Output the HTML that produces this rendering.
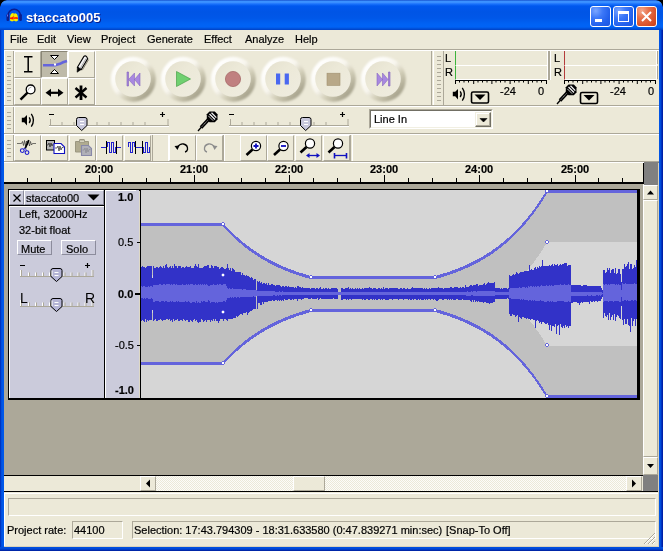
<!DOCTYPE html>
<html><head><meta charset="utf-8">
<style>
*{margin:0;padding:0;box-sizing:border-box}
html,body{width:663px;height:551px;overflow:hidden;background:#000}
body{font-family:"Liberation Sans",sans-serif;font-size:11px;color:#000;position:relative}
.a{position:absolute}
.t{position:absolute;white-space:nowrap;line-height:12px;will-change:transform;-webkit-text-stroke:.2px currentColor}
svg{position:absolute;overflow:visible}
.hl{position:absolute;height:1px}
.vl{position:absolute;width:1px}
.btn{position:absolute;width:27px;height:27px;background:#ece9d8;border-top:1px solid #fff;border-left:1px solid #fff;border-right:1px solid #aca899;border-bottom:1px solid #aca899}
.grip{position:absolute;width:4px;background:repeating-linear-gradient(#ece9d8 0 1px,#aca899 1px 2px,#ece9d8 2px 4px)}
.circ{position:absolute;width:46px;height:45px;border-radius:50%;
 background:radial-gradient(ellipse 50% 50% at 50% 50%,#ece9d8 0,#ece9d8 72%,rgba(236,233,216,0) 92%),linear-gradient(135deg,#ffffff 15%,#f4f2e8 40%,#d8d4c0 62%,#a9a590 88%);
 box-shadow:1px 1px 2px rgba(140,135,110,.55);filter:blur(.4px)}
.tbtn{position:absolute;width:21px;height:21px;border:1px solid #fff;border-radius:3px}
</style></head><body>
<!-- window frame -->
<div class="a" style="left:0;top:0;width:663px;height:551px;background:linear-gradient(90deg,#0020a8 0,#0048d8 1px,#0055e5 2px,#0058ea 3px,#0058ea 659px,#0048d8 661px,#0020a8 662px);border-radius:7px 7px 0 0"></div>
<div class="a" style="left:0;top:547px;width:663px;height:4px;background:linear-gradient(#0050e0,#0048d8 2px,#0030b8 3px,#001c98 4px)"></div>
<div class="a" style="left:0;top:0;width:663px;height:30px;border-radius:7px 7px 0 0;
 background:linear-gradient(#0a3cc0 0,#3d94ff 1px,#3a8eff 2.5px,#1a72fc 4px,#0058ee 6px,#0055e5 12px,#0057e8 18px,#0062f4 24px,#0063f6 27px,#0052dc 28.5px,#0040c4 30px)"></div>
<svg style="left:0;top:0" width="663" height="30">
 <path d="M0 0H7Q1 1 0 7Z" fill="#000"/>
 <path d="M663 0H656Q662 1 663 7Z" fill="#000"/>
</svg>
<!-- app icon -->
<svg style="left:5px;top:7px" width="18" height="16" viewBox="0 0 18 16">
 <path d="M2.8 9A6.4 6.8 0 0 1 15.6 9" fill="none" stroke="#0c1c8c" stroke-width="1.5"/>
 <rect x="1.5" y="7" width="2.7" height="7" rx="1.2" fill="#0c1c8c"/>
 <rect x="14.2" y="7" width="2.7" height="7" rx="1.2" fill="#0c1c8c"/>
 <rect x="2" y="7.5" width=".8" height="2" fill="#8080ff"/>
 <path d="M5 13.5C4.8 10 5.2 7.5 6.5 6.5L8 6 9 6.8 10.5 6.2 12 7.2C12.8 8.8 13.2 11 12.8 13.8L11 14.5 9.2 13.8 7 14.5Z" fill="#f8f000"/>
 <path d="M5 10.5L7 10.2 8.6 9 9.5 10.4 11 10 12.9 10.6 12.9 12 10 11.8 8 12.4 5 12Z" fill="#ff1800"/>
 <path d="M8.7 6.5V14" stroke="#e8a000" stroke-width=".6"/>
</svg>
<div class="t" style="left:26px;top:10px;color:#fff;font-weight:bold;font-size:13px;line-height:15px;text-shadow:1px 1px 0 #0a1e8c;-webkit-text-stroke:0">staccato005</div>
<!-- title buttons -->
<div class="tbtn" style="left:590px;top:6px;background:radial-gradient(ellipse at 25% 20%,#7ba6ff 0,#3c78f8 35%,#2260ec 70%,#1d56e0 100%)"><div class="a" style="left:4px;top:12px;width:7px;height:3px;background:#fff"></div></div>
<div class="tbtn" style="left:613px;top:6px;background:radial-gradient(ellipse at 25% 20%,#7ba6ff 0,#3c78f8 35%,#2260ec 70%,#1d56e0 100%)"><div class="a" style="left:4px;top:3.5px;width:11px;height:11px;border:1px solid #fff;border-top-width:3px"></div></div>
<div class="tbtn" style="left:636px;top:6px;background:radial-gradient(ellipse at 25% 20%,#f4a88c 0,#e6704a 35%,#d9522a 70%,#c83e18 100%)">
 <svg style="left:4px;top:4px" width="11" height="11"><path d="M1 1L10 10M10 1L1 10" stroke="#fff" stroke-width="2"/></svg></div>

<!-- client -->
<div class="a" style="left:4px;top:30px;width:655px;height:517px;background:#ece9d8"></div>
<div class="t" style="left:10px;top:33px">File</div>
<div class="t" style="left:37px;top:33px">Edit</div>
<div class="t" style="left:67px;top:33px">View</div>
<div class="t" style="left:101px;top:33px">Project</div>
<div class="t" style="left:147px;top:33px">Generate</div>
<div class="t" style="left:204px;top:33px">Effect</div>
<div class="t" style="left:245px;top:33px">Analyze</div>
<div class="t" style="left:295px;top:33px">Help</div>
<!-- toolbar separators -->
<div class="hl" style="left:4px;top:49px;width:655px;background:#aca899"></div>
<div class="hl" style="left:4px;top:50px;width:655px;background:#fff"></div>
<div class="hl" style="left:4px;top:105px;width:655px;background:#aca899"></div>
<div class="hl" style="left:4px;top:106px;width:655px;background:#fff"></div>
<div class="hl" style="left:4px;top:133px;width:655px;background:#aca899"></div>
<div class="hl" style="left:4px;top:134px;width:655px;background:#fff"></div>
<div class="hl" style="left:4px;top:161px;width:655px;background:#aca899"></div>
<div class="hl" style="left:4px;top:162px;width:655px;background:#fff"></div>
<!-- grips -->
<div class="grip" style="left:7px;top:55px;height:48px"></div>
<div class="grip" style="left:7px;top:111px;height:20px"></div>
<div class="grip" style="left:7px;top:139px;height:20px"></div>
<div class="grip" style="left:437px;top:55px;height:48px"></div>
<div class="vl" style="left:4px;top:51px;height:54px;background:#fff"></div>
<div class="vl" style="left:13px;top:51px;height:54px;background:#aca899"></div>
<div class="vl" style="left:4px;top:107px;height:26px;background:#fff"></div>
<div class="vl" style="left:14px;top:107px;height:26px;background:#fff"></div>
<div class="vl" style="left:14px;top:51px;height:54px;background:#fff"></div>
<div class="vl" style="left:13px;top:107px;height:26px;background:#aca899"></div>
<div class="vl" style="left:4px;top:135px;height:26px;background:#fff"></div>
<div class="vl" style="left:13px;top:135px;height:26px;background:#aca899"></div>
<div class="vl" style="left:431px;top:51px;height:54px;background:#aca899"></div>
<div class="vl" style="left:433px;top:51px;height:54px;background:#fff"></div>
<div class="vl" style="left:443px;top:51px;height:54px;background:#aca899"></div>
<div class="vl" style="left:95px;top:51px;height:54px;background:#fff"></div>

<!-- tool buttons -->
<div class="btn" style="left:14px;top:51px"></div>
<div class="btn" style="left:41px;top:51px;background:#bebaa9;border-color:#8a8676 #fff #fff #8a8676"></div>
<div class="btn" style="left:68px;top:51px"></div>
<div class="btn" style="left:14px;top:78px"></div>
<div class="btn" style="left:41px;top:78px"></div>
<div class="btn" style="left:68px;top:78px"></div>
<svg style="left:0;top:0" width="100" height="106">
 <!-- I-beam -->
 <path d="M24 56.8H32.5M24 71.8H32.5M28.2 56.8V71.8" stroke="#000" stroke-width="1.5" fill="none"/>
 <!-- envelope tool -->
 <path d="M50.5 55.5H58.5L54.5 59.5Z" fill="#fff" stroke="#000" stroke-width="1"/>
 <path d="M50.5 73.5H58.5L54.5 69.5Z" fill="#fff" stroke="#000" stroke-width="1"/>
 <path d="M43 65.3H55L60 63.8L63 62.3L67 61" stroke="#6464dc" stroke-width="2.6" fill="none"/>
 <rect x="54" y="63.5" width="2" height="2" fill="#fff"/>
 <!-- pencil -->
 <path d="M82.3 70.2L88.6 59.6" stroke="#8c8878" stroke-width="1"/>
 <path d="M77.45 67.23L83.9 56.37Q85.8 54.6 87.7 58.63L81.25 69.49Z" fill="#f4f4f4" stroke="#000" stroke-width="1.1"/>
 <path d="M77.1 72.2L77.45 67.23L81.25 69.49Z" fill="#000" stroke="#000" stroke-width=".6"/>
 <path d="M80.2 68.4L86.2 58.3" stroke="#a8a8a8" stroke-width="1"/>
 <!-- magnifier -->
 <path d="M27.8 92.3L20.5 99.6" stroke="#000" stroke-width="2.4"/>
 <circle cx="30.6" cy="89.4" r="4.4" fill="#fff" stroke="#000" stroke-width="1.3"/>
 <path d="M28 90.5Q28.5 87.5 31.5 87" stroke="#b0b0b0" stroke-width="1" fill="none"/>
 <!-- double arrow -->
 <path d="M48 92.8H61" stroke="#000" stroke-width="2.2"/>
 <path d="M45.5 92.8L51 88.8V96.8Z M63.5 92.8L58 88.8V96.8Z" fill="#000"/>
 <!-- asterisk -->
 <path d="M81 85.5V100" stroke="#000" stroke-width="2.8"/>
 <path d="M75.5 88L86.5 97.5M86.5 88L75.5 97.5" stroke="#000" stroke-width="2.4"/>
</svg>

<!-- transport -->
<svg style="left:0;top:0" width="430" height="106">
 <defs>
  <linearGradient id="rg" x1="0" y1="0" x2="1" y2="1"><stop offset=".15" stop-color="#ffffff"/><stop offset=".45" stop-color="#f8f6ee"/><stop offset=".62" stop-color="#d2ceb8"/><stop offset=".9" stop-color="#9a9680"/></linearGradient>
  <linearGradient id="fg" x1="0" y1="0" x2="1" y2="1"><stop offset="0" stop-color="#e4e0ce"/><stop offset=".4" stop-color="#ece9d8"/><stop offset="1" stop-color="#efece0"/></linearGradient>
  <filter id="bl" x="-20%" y="-20%" width="140%" height="140%"><feGaussianBlur stdDeviation="1.2"/></filter>
  <filter id="bl2" x="-20%" y="-20%" width="140%" height="140%"><feGaussianBlur stdDeviation=".7"/></filter>
  <g id="cb"><circle cx=".3" cy=".3" r="22.5" fill="url(#rg)" filter="url(#bl)"/><circle r="17.8" fill="url(#fg)" filter="url(#bl2)"/></g>
 </defs>
 <use href="#cb" x="133" y="79"/><use href="#cb" x="183" y="79"/><use href="#cb" x="233" y="79"/>
 <use href="#cb" x="283" y="79"/><use href="#cb" x="333" y="79"/><use href="#cb" x="383" y="79"/>
</svg>
<svg style="left:0;top:0" width="430" height="106">
 <path d="M127 72H128.5V86H127Z" fill="#a888e0" stroke="#8060b8" stroke-width=".6"/>
 <path d="M128.5 79.5L134.5 73V86Z M134.5 79.5L140 73V86Z" fill="#a888e0" stroke="#8868c0" stroke-width=".6"/>
 <path d="M176.5 71.5L190.5 79L176.5 86.5Z" fill="#70d070" stroke="#48a048" stroke-width=".7"/>
 <circle cx="233" cy="79" r="7.6" fill="#c08080" stroke="#a06060" stroke-width=".7"/>
 <rect x="276" y="73.5" width="4.2" height="11" fill="#4a68f0"/>
 <rect x="284.7" y="73.5" width="4.2" height="11" fill="#4a68f0"/>
 <rect x="327" y="73.2" width="13" height="12.2" fill="#b8a888" stroke="#a09070" stroke-width=".6"/>
 <path d="M377 73V86L382.5 79.5Z M382.5 73V86L388 79.5Z" fill="#a888e0" stroke="#8868c0" stroke-width=".6"/>
 <path d="M388.5 72H390V86H388.5Z" fill="#a888e0" stroke="#8060b8" stroke-width=".6"/>
</svg>

<!-- meters -->
<div class="t" style="left:445px;top:52px">L</div>
<div class="t" style="left:445px;top:66px">R</div>
<div class="t" style="left:554px;top:52px">L</div>
<div class="t" style="left:554px;top:66px">R</div>
<div class="a" style="left:455px;top:51px;width:93px;height:15px;border-right:1px solid #fff;border-bottom:1px solid #fff;border-left:1px solid #3cb43c"></div>
<div class="a" style="left:455px;top:66px;width:93px;height:14px;border-right:1px solid #fff;border-bottom:1px solid #fff;border-left:1px solid #3cb43c"></div>
<div class="a" style="left:548px;top:51px;width:2px;height:29px;background:#aca899"></div>
<div class="vl" style="left:550px;top:51px;height:29px;background:#fff"></div>
<div class="vl" style="left:657px;top:51px;height:13px;background:#aca899"></div>
<div class="vl" style="left:657px;top:66px;height:13px;background:#aca899"></div>
<div class="a" style="left:564px;top:51px;width:93px;height:15px;border-right:1px solid #fff;border-bottom:1px solid #fff;border-left:1px solid #b43c3c"></div>
<div class="a" style="left:564px;top:66px;width:93px;height:14px;border-right:1px solid #fff;border-bottom:1px solid #fff;border-left:1px solid #b43c3c"></div>
<svg style="left:0;top:0" width="663" height="106">
 <path id="tk" d="M455 80.5H547M455.5 80V84M473.7 80V84M491.9 80V84M510.1 80V84M528.3 80V84M546.5 80V84" stroke="#000" stroke-width="1" fill="none"/>
 <path d="M459.5 80V82.5M464 80V82.5M468.5 80V82.5M478 80V82.5M482.5 80V82.5M487 80V82.5M496 80V82.5M500.5 80V82.5M505 80V82.5M514.5 80V82.5M519 80V82.5M523.5 80V82.5M532.5 80V82.5M537 80V82.5M541.5 80V82.5" stroke="#000" stroke-width="1" fill="none"/>
 <g transform="translate(109,0)">
 <path d="M455 80.5H547M455.5 80V84M473.7 80V84M491.9 80V84M510.1 80V84M528.3 80V84M546.5 80V84" stroke="#000" stroke-width="1" fill="none"/>
 <path d="M459.5 80V82.5M464 80V82.5M468.5 80V82.5M478 80V82.5M482.5 80V82.5M487 80V82.5M496 80V82.5M500.5 80V82.5M505 80V82.5M514.5 80V82.5M519 80V82.5M523.5 80V82.5M532.5 80V82.5M537 80V82.5M541.5 80V82.5" stroke="#000" stroke-width="1" fill="none"/>
 </g>
 <!-- speaker -->
 <use href="#spk" x="431" y="-26"/>
 <!-- dropdowns -->
 <rect x="471.5" y="92" width="17" height="11" rx="1.5" fill="#ece9d8" stroke="#000" stroke-width="1.6"/>
 <path d="M474.5 94.5H485.5L480 100Z" fill="#000"/>
 <rect x="580.5" y="92.5" width="17" height="11" rx="1.5" fill="#ece9d8" stroke="#000" stroke-width="1.6"/>
 <path d="M583.5 95H594.5L589 100.5Z" fill="#000"/>
 <!-- mic -->
 <use href="#mic" x="359" y="-27"/>
</svg>
<div class="t" style="left:500px;top:85px">-24</div>
<div class="t" style="left:538px;top:85px">0</div>
<div class="t" style="left:610px;top:85px">-24</div>
<div class="t" style="left:648px;top:85px">0</div>

<!-- mixer toolbar -->
<svg style="left:0;top:0" width="663" height="134">
 <!-- speaker -->
 <g id="spk">
 <path d="M21.8 117.8H24.2L27 115V125.5L24.2 122.2H21.8Z" fill="#000"/>
 <path d="M29.2 117.3Q31.3 120.2 29.2 123M31.3 113.8Q35.6 120.2 31.3 126.6" stroke="#000" stroke-width="1.3" fill="none"/>
 </g>
 <!-- slider 1 -->
 <path d="M49 125.5H169" stroke="#aca899" stroke-width="1"/>
 <path d="M49 126.5H169" stroke="#fff" stroke-width="1"/>
 <path d="M49 114.5H54M160 114.5H165M162.5 112V117" stroke="#000" stroke-width="1.2"/>
 <path d="M50.5 119V125M62 122V125M74 122V125M97 122V125M109 122V125M121 122V125M133 122V125M145 122V125M168 119V125" stroke="#aca899" stroke-width="1"/>
 <path d="M76.5 125.5V119.5Q76.5 117.5 78.5 117.5H85Q87 117.5 87 119.5V125.5L81.7 130.5Z" fill="#c8c8dc" stroke="#000" stroke-width="1"/>
 <path d="M80 121.5H84M80 124.5H84" stroke="#fff" stroke-width="1"/>
 <!-- mic -->
 <g id="mic">
 <path d="M208.5 119.5L201 127.5" stroke="#000" stroke-width="3.4"/>
 <path d="M207.5 120.5L202 126.5" stroke="#fff" stroke-width=".8" stroke-dasharray="1 .8"/>
 <path d="M201.5 127L198 131" stroke="#000" stroke-width="1.4"/>
 <path d="M209.5 111.5H214.8L217.5 114.2V119.5L214.8 122.2H209.5L206.8 119.5V114.2Z" fill="#000"/>
 <path d="M209.5 114L215 119.5M211.5 112.8L216.3 117.6" stroke="#f4f4f4" stroke-width="1.3"/>
 <path d="M208.3 115.8L213.2 120.7" stroke="#c8c8c8" stroke-width="1"/>
 </g>
 <!-- slider 2 -->
 <path d="M229 125.5H349" stroke="#aca899" stroke-width="1"/>
 <path d="M229 126.5H349" stroke="#fff" stroke-width="1"/>
 <path d="M229 114.5H234M340 114.5H345M342.5 112V117" stroke="#000" stroke-width="1.2"/>
 <path d="M230.5 119V125M242 122V125M254 122V125M266 122V125M278 122V125M290 122V125M314 122V125M326 122V125M348 119V125" stroke="#aca899" stroke-width="1"/>
 <path d="M300.5 125.5V119.5Q300.5 117.5 302.5 117.5H309Q311 117.5 311 119.5V125.5L305.7 130.5Z" fill="#c8c8dc" stroke="#000" stroke-width="1"/>
 <path d="M304 121.5H308M304 124.5H308" stroke="#fff" stroke-width="1"/>
</svg>
<!-- combo -->
<div class="a" style="left:369px;top:109px;width:124px;height:20px;background:#fff;border-top:1px solid #aca899;border-left:1px solid #aca899;border-right:1px solid #fff;border-bottom:1px solid #fff"></div>
<div class="a" style="left:370px;top:110px;width:122px;height:18px;border-top:1px solid #716f64;border-left:1px solid #716f64;border-right:1px solid #f1efe2;border-bottom:1px solid #f1efe2"></div>
<div class="t" style="left:374px;top:113px">Line In</div>
<div class="a" style="left:475px;top:112px;width:16px;height:15px;background:#ece9d8;border-top:1px solid #f1efe2;border-left:1px solid #f1efe2;border-right:1px solid #716f64;border-bottom:1px solid #716f64;box-shadow:inset -1px -1px 0 #aca899,inset 1px 1px 0 #fff"></div>
<svg style="left:0;top:0" width="663" height="134"><path d="M480 118.5H487L483.5 122Z" fill="#000" stroke="#000" stroke-width=".6"/></svg>
<!-- edit toolbar buttons -->
<div class="btn" style="left:14px;top:135px;height:26px"></div>
<div class="btn" style="left:41px;top:135px;height:26px"></div>
<div class="btn" style="left:69px;top:135px;height:26px"></div>
<div class="btn" style="left:96px;top:135px;height:26px"></div>
<div class="btn" style="left:124px;top:135px;height:26px"></div>
<div class="btn" style="left:169px;top:135px;height:26px"></div>
<div class="btn" style="left:196px;top:135px;height:26px"></div>
<div class="btn" style="left:240px;top:135px;height:26px"></div>
<div class="btn" style="left:267px;top:135px;height:26px"></div>
<div class="btn" style="left:295px;top:135px;height:26px"></div>
<div class="btn" style="left:323px;top:135px;height:26px"></div>
<div class="vl" style="left:152px;top:135px;height:26px;background:#aca899"></div>
<div class="vl" style="left:168px;top:135px;height:26px;background:#fff"></div>
<div class="vl" style="left:223px;top:135px;height:26px;background:#aca899"></div>
<div class="vl" style="left:224px;top:135px;height:26px;background:#fff"></div>
<div class="vl" style="left:350px;top:135px;height:26px;background:#aca899"></div>
<div class="vl" style="left:352px;top:135px;height:26px;background:#fff"></div>
<svg style="left:0;top:0" width="663" height="163">
 <!-- cut -->
 <path d="M17 143.5H21.5L22.5 141.5L23.5 145.5L24.5 140.5L25.5 146L26.5 141L27.5 145L28.5 140.5L29.5 146L30.5 141.5L31.5 145L32.5 143.5H36" stroke="#202020" stroke-width=".6" fill="none"/>
 <path d="M28.8 140.2L25.2 148.4" stroke="#000" stroke-width="1.8"/>
 <circle cx="22.3" cy="150.6" r="1.9" fill="none" stroke="#1818d0" stroke-width="1.1"/>
 <circle cx="27" cy="152.6" r="1.9" fill="none" stroke="#1818d0" stroke-width="1.1"/>
 <path d="M23.6 149.2L25.2 148M26.4 150.8L25.6 148.6" stroke="#1818d0" stroke-width=".9"/>
 <!-- copy -->
 <rect x="46.5" y="140.5" width="8" height="9.5" fill="#b4b4b4" stroke="#000" stroke-width="1"/>
 <path d="M46 145H48L49 143L50 147L51 143L52 146L53 144" stroke="#202020" stroke-width=".7" fill="none"/>
 <path d="M54 143.5H61L64.5 147V153.5H54Z" fill="#fff" stroke="#1010c0" stroke-width="1.1"/>
 <path d="M55 148H57L58 146L59 151L60 146L61 150L62 147.5H63.5" stroke="#202020" stroke-width=".7" fill="none"/>
 <!-- paste (disabled) -->
 <path d="M75.5 141.5H79L80 139.5H84L85 141.5H88.5V152H75.5Z" fill="#b0ab90" stroke="#9a9680" stroke-width="1"/>
 <rect x="79.5" y="140" width="5" height="2.5" fill="#d8d4c0" stroke="#9a9680" stroke-width=".8"/>
 <path d="M81.5 145.5H88.5L91.5 148.5V155.5H81.5Z" fill="#b0b0b8" stroke="#8888a8" stroke-width="1.1"/>
 <path d="M82.5 150H84L85 148L86 153L87 148L88 152L89 149.5H90.5" stroke="#8a8a90" stroke-width=".7" fill="none"/>
 <!-- trim -->
 <path d="M101 147.5H106M117 147.5H121" stroke="#2020d0" stroke-width="1" shape-rendering="crispEdges"/>
 <path d="M107.5 147V142.5H109.5V152.5H111.5V142.5H113.5V152.5H115.5V147" stroke="#2020d0" stroke-width="1" fill="none" shape-rendering="crispEdges"/>
 <path d="M106.5 141V154M116.5 141V154" stroke="#000" stroke-width="1" shape-rendering="crispEdges"/>
 <!-- silence -->
 <path d="M128.5 147V142.5H130.5V152.5H132.5V142.5H134.5V147" stroke="#2020d0" stroke-width="1" fill="none" shape-rendering="crispEdges"/>
 <path d="M136 147.5H142" stroke="#2020d0" stroke-width="1" shape-rendering="crispEdges"/>
 <path d="M143.5 147V152.5H145.5V142.5H147.5V152.5H149.5V147" stroke="#2020d0" stroke-width="1" fill="none" shape-rendering="crispEdges"/>
 <path d="M135.5 141V154M142.5 141V154" stroke="#000" stroke-width="1" shape-rendering="crispEdges"/>
 <!-- undo -->
 <path d="M177 147.5Q180 143.5 183.5 144Q188 145 187.5 149.5Q187 151.5 185 152" stroke="#000" stroke-width="1.3" fill="none"/>
 <path d="M174.5 146L179.5 145.5L177.5 150Z" fill="#000"/>
 <!-- redo -->
 <path d="M215 147.5Q212 143.5 208.5 144Q204 145 204.5 149.5Q205 151.5 207 152" stroke="#8c8c8c" stroke-width="1.3" fill="none"/>
 <path d="M217.5 146L212.5 145.5L214.5 150Z" fill="#8c8c8c"/>
 <!-- zoom in -->
 <path d="M252.5 149.5L246.5 155" stroke="#000" stroke-width="2.6"/>
 <circle cx="256" cy="146" r="4.6" fill="#fff" stroke="#000" stroke-width="1.2"/>
 <path d="M253.5 146H258.5M256 143.5V148.5" stroke="#1010c0" stroke-width="1.8"/>
 <!-- zoom out -->
 <path d="M280 149.5L274 155" stroke="#000" stroke-width="2.6"/>
 <circle cx="283.5" cy="146" r="4.6" fill="#fff" stroke="#000" stroke-width="1.2"/>
 <path d="M281 146H286" stroke="#1010c0" stroke-width="1.8"/>
 <!-- fit sel -->
 <path d="M306.5 147L300.5 152.5" stroke="#000" stroke-width="2.6"/>
 <circle cx="310" cy="143.5" r="4.6" fill="#fff" stroke="#000" stroke-width="1.2"/>
 <path d="M308 155.5H318" stroke="#1010c0" stroke-width="1.3"/>
 <path d="M306 155.5L309.5 153V158Z M320 155.5L316.5 153V158Z" fill="#1010c0"/>
 <!-- fit -->
 <path d="M334.5 147L328.5 152.5" stroke="#000" stroke-width="2.6"/>
 <circle cx="338" cy="143.5" r="4.6" fill="#fff" stroke="#000" stroke-width="1.2"/>
 <path d="M334.5 155.5H346.5" stroke="#1010c0" stroke-width="1.3"/>
 <path d="M334.5 153V158.5M346.5 153V158.5" stroke="#1010c0" stroke-width="1.6"/>
</svg>


<!-- ruler -->
<div class="a" style="left:4px;top:163px;width:640px;height:19px;background:#ece9d8"></div>
<div class="a" style="left:4px;top:182px;width:640px;height:2px;background:#000"></div>
<div class="vl" style="left:643px;top:163px;height:20px;background:#000"></div>
<div class="a" style="left:644px;top:162px;width:15px;height:23px;background:#808080"></div>
<svg style="left:0;top:0" width="663" height="190"><path d="M27.5 178V182M51.5 178V182M75.5 178V182M99.5 175V182M122.5 178V182M146.5 178V182M170.5 178V182M194.5 175V182M218.5 178V182M241.5 178V182M265.5 178V182M289.5 175V182M313.5 178V182M337.5 178V182M360.5 178V182M384.5 175V182M408.5 178V182M432.5 178V182M456.5 178V182M479.5 175V182M503.5 178V182M527.5 178V182M551.5 178V182M575.5 175V182M598.5 178V182M622.5 178V182" stroke="#000" stroke-width="1"/></svg>
<div class="t" style="left:85px;top:163px;width:28px;text-align:center;font-weight:bold">20:00</div><div class="t" style="left:180px;top:163px;width:28px;text-align:center;font-weight:bold">21:00</div><div class="t" style="left:275px;top:163px;width:28px;text-align:center;font-weight:bold">22:00</div><div class="t" style="left:370px;top:163px;width:28px;text-align:center;font-weight:bold">23:00</div><div class="t" style="left:465px;top:163px;width:28px;text-align:center;font-weight:bold">24:00</div><div class="t" style="left:561px;top:163px;width:28px;text-align:center;font-weight:bold">25:00</div>
<!-- track area -->
<div class="a" style="left:4px;top:184px;width:639px;height:292px;background:#aca899"></div>
<!-- track -->
<div class="a" style="left:8px;top:189px;width:632px;height:211px;background:#000"></div>
<div class="a" style="left:9px;top:190px;width:95px;height:208px;background:#cbcbdb"></div>
<div class="a" style="left:105px;top:190px;width:34px;height:208px;background:#cbcbdb"></div>
<div class="a" style="left:141px;top:190px;width:496px;height:208px;background:#d6d6d6"></div>
<!-- close box & name -->
<div class="a" style="left:9px;top:190px;width:15px;height:15px;border-top:1px solid #fff;border-left:1px solid #fff;border-right:1px solid #8c8c9c;border-bottom:1px solid #8c8c9c"></div>
<svg style="left:0;top:0" width="140" height="400">
 <path d="M13.5 194.5L20.5 201.5M20.5 194.5L13.5 201.5" stroke="#000" stroke-width="1.3"/>
 <path d="M87.5 194.5H99.5L93.5 200.5Z" fill="#000"/>
</svg>
<div class="a" style="left:24px;top:190px;width:80px;height:15px;border-top:1px solid #fff;border-left:1px solid #fff;border-right:1px solid #8c8c9c;border-bottom:1px solid #8c8c9c"></div>
<div class="t" style="left:26px;top:192px">staccato00</div>
<div class="hl" style="left:9px;top:205px;width:95px;background:#000"></div>
<div class="a" style="left:9px;top:206px;width:95px;height:192px;border-top:1px solid #fff;border-left:1px solid #fff"></div>
<div class="t" style="left:19px;top:208px">Left, 32000Hz</div>
<div class="t" style="left:19px;top:224px">32-bit float</div>
<div class="a" style="left:17px;top:240px;width:35px;height:15px;border-top:1px solid #fff;border-left:1px solid #fff;border-right:1px solid #8c8c9c;border-bottom:1px solid #8c8c9c"></div>
<div class="t" style="left:21px;top:243px">Mute</div>
<div class="a" style="left:61px;top:240px;width:35px;height:15px;border-top:1px solid #fff;border-left:1px solid #fff;border-right:1px solid #8c8c9c;border-bottom:1px solid #8c8c9c"></div>
<div class="t" style="left:66px;top:243px">Solo</div>
<div class="vl" style="left:104px;top:190px;height:208px;background:#000"></div>
<div class="vl" style="left:139px;top:191px;height:207px;background:#ded9c6"></div>
<div class="vl" style="left:105px;top:190px;height:208px;background:#fff"></div>
<div class="hl" style="left:105px;top:190px;width:31px;background:#fff"></div>
<div class="vl" style="left:140px;top:190px;height:208px;background:#000"></div>
<svg style="left:0;top:0" width="140" height="400">
 <path d="M20 265.5H25M85 265.5H90M87.5 263V268" stroke="#000" stroke-width="1.2"/>
 <path d="M20 276.5H94" stroke="#aca899" stroke-width="1"/>
 <path d="M20 306.5H94" stroke="#aca899" stroke-width="1"/>
 <path d="M20.5 270V276M28.5 272.5V276M35.5 272.5V276M42.5 272.5V276M49.5 272.5V276M64 272.5V276M71 272.5V276M78 272.5V276M85 272.5V276M92 270V276" stroke="#fff" stroke-width="1"/>
 <path d="M21.5 270V276M29.5 272.5V276M36.5 272.5V276M43.5 272.5V276M50.5 272.5V276M65 272.5V276M72 272.5V276M79 272.5V276M86 272.5V276M93 270V276" stroke="#aca899" stroke-width="1"/>
 <g transform="translate(0,30)">
 <path d="M20.5 270V276M28.5 272.5V276M35.5 272.5V276M42.5 272.5V276M49.5 272.5V276M64 272.5V276M71 272.5V276M78 272.5V276M85 272.5V276M92 270V276" stroke="#fff" stroke-width="1"/>
 <path d="M21.5 270V276M29.5 272.5V276M36.5 272.5V276M43.5 272.5V276M50.5 272.5V276M65 272.5V276M72 272.5V276M79 272.5V276M86 272.5V276M93 270V276" stroke="#aca899" stroke-width="1"/>
 </g>
 <path d="M51 276.5V270.5Q51 268.5 53 268.5H60Q62 268.5 62 270.5V276.5L56.5 281.5Z" fill="#b4b4d6" stroke="#000" stroke-width="1"/>
 <path d="M52 270.5V276" stroke="#fff" stroke-width="1"/>
 <path d="M54.5 272.5H58.5M54.5 275.5H58.5" stroke="#fff" stroke-width="1"/>
 <path d="M51 306.5V300.5Q51 298.5 53 298.5H60Q62 298.5 62 300.5V306.5L56.5 311.5Z" fill="#b4b4d6" stroke="#000" stroke-width="1"/>
 <path d="M52 300.5V306" stroke="#fff" stroke-width="1"/>
 <path d="M54.5 302.5H58.5M54.5 305.5H58.5" stroke="#fff" stroke-width="1"/>
</svg>
<div class="t" style="left:20px;top:291px;font-size:14px;line-height:14px;-webkit-text-stroke:0">L</div>
<div class="t" style="left:85px;top:291px;font-size:14px;line-height:14px;-webkit-text-stroke:0">R</div>

<svg style="left:0;top:0" width="663" height="551" viewBox="0 0 663 551" shape-rendering="crispEdges"><defs><clipPath id="wc"><rect x="141" y="190" width="496" height="208"/></clipPath></defs><g clip-path="url(#wc)"><path fill="#c0c0c0" d="M141 224h1V275h-1ZM141 313h1V363h-1ZM142 224h1V275h-1ZM142 313h1V363h-1ZM143 224h1V275h-1ZM143 313h1V363h-1ZM144 224h1V275h-1ZM144 313h1V363h-1ZM145 224h1V275h-1ZM145 313h1V363h-1ZM146 224h1V275h-1ZM146 313h1V363h-1ZM147 224h1V275h-1ZM147 313h1V363h-1ZM148 224h1V275h-1ZM148 313h1V363h-1ZM149 224h1V275h-1ZM149 313h1V363h-1ZM150 224h1V275h-1ZM150 313h1V363h-1ZM151 224h1V275h-1ZM151 313h1V363h-1ZM152 224h1V275h-1ZM152 313h1V363h-1ZM153 224h1V275h-1ZM153 313h1V363h-1ZM154 224h1V275h-1ZM154 313h1V363h-1ZM155 224h1V275h-1ZM155 313h1V363h-1ZM156 224h1V275h-1ZM156 313h1V363h-1ZM157 224h1V275h-1ZM157 313h1V363h-1ZM158 224h1V275h-1ZM158 313h1V363h-1ZM159 224h1V275h-1ZM159 313h1V363h-1ZM160 224h1V275h-1ZM160 313h1V363h-1ZM161 224h1V275h-1ZM161 313h1V363h-1ZM162 224h1V275h-1ZM162 313h1V363h-1ZM163 224h1V275h-1ZM163 313h1V363h-1ZM164 224h1V275h-1ZM164 313h1V363h-1ZM165 224h1V275h-1ZM165 313h1V363h-1ZM166 224h1V275h-1ZM166 313h1V363h-1ZM167 224h1V275h-1ZM167 313h1V363h-1ZM168 224h1V275h-1ZM168 313h1V363h-1ZM169 224h1V275h-1ZM169 313h1V363h-1ZM170 224h1V275h-1ZM170 313h1V363h-1ZM171 224h1V275h-1ZM171 313h1V363h-1ZM172 224h1V275h-1ZM172 313h1V363h-1ZM173 224h1V275h-1ZM173 313h1V363h-1ZM174 224h1V275h-1ZM174 313h1V363h-1ZM175 224h1V275h-1ZM175 313h1V363h-1ZM176 224h1V275h-1ZM176 313h1V363h-1ZM177 224h1V275h-1ZM177 313h1V363h-1ZM178 224h1V275h-1ZM178 313h1V363h-1ZM179 224h1V275h-1ZM179 313h1V363h-1ZM180 224h1V275h-1ZM180 313h1V363h-1ZM181 224h1V275h-1ZM181 313h1V363h-1ZM182 224h1V275h-1ZM182 313h1V363h-1ZM183 224h1V275h-1ZM183 313h1V363h-1ZM184 224h1V275h-1ZM184 313h1V363h-1ZM185 224h1V275h-1ZM185 313h1V363h-1ZM186 224h1V275h-1ZM186 313h1V363h-1ZM187 224h1V275h-1ZM187 313h1V363h-1ZM188 224h1V275h-1ZM188 313h1V363h-1ZM189 224h1V275h-1ZM189 313h1V363h-1ZM190 224h1V275h-1ZM190 313h1V363h-1ZM191 224h1V275h-1ZM191 313h1V363h-1ZM192 224h1V275h-1ZM192 313h1V363h-1ZM193 224h1V275h-1ZM193 313h1V363h-1ZM194 224h1V275h-1ZM194 313h1V363h-1ZM195 224h1V275h-1ZM195 313h1V363h-1ZM196 224h1V275h-1ZM196 313h1V363h-1ZM197 224h1V275h-1ZM197 313h1V363h-1ZM198 224h1V275h-1ZM198 313h1V363h-1ZM199 224h1V275h-1ZM199 313h1V363h-1ZM200 224h1V275h-1ZM200 313h1V363h-1ZM201 224h1V275h-1ZM201 313h1V363h-1ZM202 224h1V275h-1ZM202 313h1V363h-1ZM203 224h1V275h-1ZM203 313h1V363h-1ZM204 224h1V275h-1ZM204 313h1V363h-1ZM205 224h1V275h-1ZM205 313h1V363h-1ZM206 224h1V275h-1ZM206 313h1V363h-1ZM207 224h1V275h-1ZM207 313h1V363h-1ZM208 224h1V275h-1ZM208 313h1V363h-1ZM209 224h1V275h-1ZM209 313h1V363h-1ZM210 224h1V275h-1ZM210 313h1V363h-1ZM211 224h1V275h-1ZM211 313h1V363h-1ZM212 224h1V275h-1ZM212 313h1V363h-1ZM213 224h1V275h-1ZM213 313h1V363h-1ZM214 224h1V275h-1ZM214 313h1V363h-1ZM215 224h1V275h-1ZM215 313h1V363h-1ZM216 224h1V275h-1ZM216 313h1V363h-1ZM217 224h1V275h-1ZM217 313h1V363h-1ZM218 224h1V275h-1ZM218 313h1V363h-1ZM219 224h1V275h-1ZM219 313h1V363h-1ZM220 224h1V275h-1ZM220 313h1V363h-1ZM221 224h1V275h-1ZM221 313h1V363h-1ZM222 224h1V275h-1ZM222 313h1V363h-1ZM223 225h1V276h-1ZM223 312h1V362h-1ZM224 226h1V277h-1ZM224 311h1V361h-1ZM225 227h1V278h-1ZM225 310h1V360h-1ZM226 228h1V279h-1ZM226 309h1V359h-1ZM227 229h1V280h-1ZM227 308h1V358h-1ZM228 230h1V281h-1ZM228 307h1V357h-1ZM229 231h1V282h-1ZM229 306h1V356h-1ZM230 232h1V283h-1ZM230 305h1V355h-1ZM231 233h1V284h-1ZM231 304h1V354h-1ZM232 234h1V285h-1ZM232 303h1V353h-1ZM233 235h1V286h-1ZM233 302h1V352h-1ZM234 236h1V287h-1ZM234 301h1V351h-1ZM235 237h1V288h-1ZM235 300h1V350h-1ZM236 238h1V289h-1ZM236 299h1V349h-1ZM237 239h1V290h-1ZM237 298h1V348h-1ZM238 240h1V291h-1ZM238 297h1V347h-1ZM239 240h1V292h-1ZM239 296h1V347h-1ZM240 241h1V293h-1ZM240 295h1V346h-1ZM241 242h1V293h-1ZM241 295h1V345h-1ZM242 243h1V344h-1ZM243 244h1V343h-1ZM244 245h1V342h-1ZM245 245h1V342h-1ZM246 246h1V341h-1ZM247 247h1V340h-1ZM248 248h1V339h-1ZM249 248h1V339h-1ZM250 249h1V338h-1ZM251 250h1V337h-1ZM252 251h1V336h-1ZM253 251h1V336h-1ZM254 252h1V335h-1ZM255 253h1V334h-1ZM256 253h1V334h-1ZM257 254h1V333h-1ZM258 255h1V332h-1ZM259 255h1V332h-1ZM260 256h1V331h-1ZM261 256h1V331h-1ZM262 257h1V330h-1ZM263 258h1V329h-1ZM264 258h1V329h-1ZM265 259h1V328h-1ZM266 259h1V328h-1ZM267 260h1V327h-1ZM268 260h1V327h-1ZM269 261h1V326h-1ZM270 262h1V325h-1ZM271 262h1V325h-1ZM272 263h1V324h-1ZM273 263h1V324h-1ZM274 264h1V323h-1ZM275 264h1V323h-1ZM276 265h1V322h-1ZM277 265h1V322h-1ZM278 265h1V322h-1ZM279 266h1V321h-1ZM280 266h1V321h-1ZM281 267h1V320h-1ZM282 267h1V320h-1ZM283 268h1V319h-1ZM284 268h1V319h-1ZM285 268h1V319h-1ZM286 269h1V318h-1ZM287 269h1V318h-1ZM288 270h1V317h-1ZM289 270h1V317h-1ZM290 270h1V317h-1ZM291 271h1V316h-1ZM292 271h1V316h-1ZM293 272h1V315h-1ZM294 272h1V315h-1ZM295 272h1V315h-1ZM296 273h1V314h-1ZM297 273h1V314h-1ZM298 273h1V314h-1ZM299 274h1V313h-1ZM300 274h1V313h-1ZM301 274h1V313h-1ZM302 275h1V312h-1ZM303 275h1V312h-1ZM304 275h1V312h-1ZM305 275h1V312h-1ZM306 276h1V311h-1ZM307 276h1V311h-1ZM308 276h1V311h-1ZM309 277h1V310h-1ZM310 277h1V310h-1ZM311 277h1V310h-1ZM312 277h1V310h-1ZM313 277h1V310h-1ZM314 277h1V310h-1ZM315 277h1V310h-1ZM316 277h1V310h-1ZM317 277h1V310h-1ZM318 277h1V310h-1ZM319 277h1V310h-1ZM320 277h1V310h-1ZM321 277h1V310h-1ZM322 277h1V310h-1ZM323 277h1V310h-1ZM324 277h1V310h-1ZM325 277h1V310h-1ZM326 277h1V310h-1ZM327 277h1V310h-1ZM328 277h1V310h-1ZM329 277h1V310h-1ZM330 277h1V310h-1ZM331 277h1V310h-1ZM332 277h1V310h-1ZM333 277h1V310h-1ZM334 277h1V310h-1ZM335 277h1V310h-1ZM336 277h1V310h-1ZM337 277h1V310h-1ZM338 277h1V310h-1ZM339 277h1V310h-1ZM340 277h1V310h-1ZM341 277h1V310h-1ZM342 277h1V310h-1ZM343 277h1V310h-1ZM344 277h1V310h-1ZM345 277h1V310h-1ZM346 277h1V310h-1ZM347 277h1V310h-1ZM348 277h1V310h-1ZM349 277h1V310h-1ZM350 277h1V310h-1ZM351 277h1V310h-1ZM352 277h1V310h-1ZM353 277h1V310h-1ZM354 277h1V310h-1ZM355 277h1V310h-1ZM356 277h1V310h-1ZM357 277h1V310h-1ZM358 277h1V310h-1ZM359 277h1V310h-1ZM360 277h1V310h-1ZM361 277h1V310h-1ZM362 277h1V310h-1ZM363 277h1V310h-1ZM364 277h1V310h-1ZM365 277h1V310h-1ZM366 277h1V310h-1ZM367 277h1V310h-1ZM368 277h1V310h-1ZM369 277h1V310h-1ZM370 277h1V310h-1ZM371 277h1V310h-1ZM372 277h1V310h-1ZM373 277h1V310h-1ZM374 277h1V310h-1ZM375 277h1V310h-1ZM376 277h1V310h-1ZM377 277h1V310h-1ZM378 277h1V310h-1ZM379 277h1V310h-1ZM380 277h1V310h-1ZM381 277h1V310h-1ZM382 277h1V310h-1ZM383 277h1V310h-1ZM384 277h1V310h-1ZM385 277h1V310h-1ZM386 277h1V310h-1ZM387 277h1V310h-1ZM388 277h1V310h-1ZM389 277h1V310h-1ZM390 277h1V310h-1ZM391 277h1V310h-1ZM392 277h1V310h-1ZM393 277h1V310h-1ZM394 277h1V310h-1ZM395 277h1V310h-1ZM396 277h1V310h-1ZM397 277h1V310h-1ZM398 277h1V310h-1ZM399 277h1V310h-1ZM400 277h1V310h-1ZM401 277h1V310h-1ZM402 277h1V310h-1ZM403 277h1V310h-1ZM404 277h1V310h-1ZM405 277h1V310h-1ZM406 277h1V310h-1ZM407 277h1V310h-1ZM408 277h1V310h-1ZM409 277h1V310h-1ZM410 277h1V310h-1ZM411 277h1V310h-1ZM412 277h1V310h-1ZM413 277h1V310h-1ZM414 277h1V310h-1ZM415 277h1V310h-1ZM416 277h1V310h-1ZM417 277h1V310h-1ZM418 277h1V310h-1ZM419 277h1V310h-1ZM420 277h1V310h-1ZM421 277h1V310h-1ZM422 277h1V310h-1ZM423 277h1V310h-1ZM424 277h1V310h-1ZM425 277h1V310h-1ZM426 277h1V310h-1ZM427 277h1V310h-1ZM428 277h1V310h-1ZM429 277h1V310h-1ZM430 277h1V310h-1ZM431 277h1V310h-1ZM432 277h1V310h-1ZM433 277h1V310h-1ZM434 277h1V310h-1ZM435 277h1V310h-1ZM436 277h1V310h-1ZM437 276h1V311h-1ZM438 276h1V311h-1ZM439 276h1V311h-1ZM440 275h1V312h-1ZM441 275h1V312h-1ZM442 275h1V312h-1ZM443 275h1V312h-1ZM444 274h1V313h-1ZM445 274h1V313h-1ZM446 274h1V313h-1ZM447 273h1V314h-1ZM448 273h1V314h-1ZM449 273h1V314h-1ZM450 272h1V315h-1ZM451 272h1V315h-1ZM452 272h1V315h-1ZM453 271h1V316h-1ZM454 271h1V316h-1ZM455 270h1V317h-1ZM456 270h1V317h-1ZM457 270h1V317h-1ZM458 269h1V318h-1ZM459 269h1V318h-1ZM460 268h1V319h-1ZM461 268h1V319h-1ZM462 268h1V319h-1ZM463 267h1V320h-1ZM464 267h1V320h-1ZM465 266h1V321h-1ZM466 266h1V321h-1ZM467 265h1V322h-1ZM468 265h1V322h-1ZM469 265h1V322h-1ZM470 264h1V323h-1ZM471 264h1V323h-1ZM472 263h1V324h-1ZM473 263h1V324h-1ZM474 262h1V325h-1ZM475 262h1V325h-1ZM476 261h1V326h-1ZM477 260h1V327h-1ZM478 260h1V327h-1ZM479 259h1V328h-1ZM480 259h1V328h-1ZM481 258h1V329h-1ZM482 258h1V329h-1ZM483 257h1V330h-1ZM484 257h1V330h-1ZM485 256h1V331h-1ZM486 255h1V332h-1ZM487 255h1V332h-1ZM488 254h1V333h-1ZM489 253h1V334h-1ZM490 253h1V334h-1ZM491 252h1V335h-1ZM492 251h1V336h-1ZM493 251h1V336h-1ZM494 250h1V337h-1ZM495 249h1V338h-1ZM496 249h1V338h-1ZM497 248h1V339h-1ZM498 247h1V340h-1ZM499 246h1V341h-1ZM500 245h1V342h-1ZM501 245h1V342h-1ZM502 244h1V343h-1ZM503 243h1V344h-1ZM504 242h1V293h-1ZM504 295h1V345h-1ZM505 241h1V293h-1ZM505 295h1V346h-1ZM506 241h1V292h-1ZM506 296h1V346h-1ZM507 240h1V291h-1ZM507 297h1V347h-1ZM508 239h1V290h-1ZM508 298h1V348h-1ZM509 238h1V289h-1ZM509 299h1V349h-1ZM510 237h1V288h-1ZM510 300h1V350h-1ZM511 236h1V287h-1ZM511 301h1V351h-1ZM512 235h1V286h-1ZM512 302h1V352h-1ZM513 234h1V285h-1ZM513 303h1V353h-1ZM514 233h1V284h-1ZM514 304h1V354h-1ZM515 232h1V283h-1ZM515 305h1V355h-1ZM516 231h1V282h-1ZM516 306h1V356h-1ZM517 230h1V281h-1ZM517 307h1V357h-1ZM518 229h1V280h-1ZM518 308h1V358h-1ZM519 228h1V279h-1ZM519 309h1V359h-1ZM520 227h1V278h-1ZM520 310h1V360h-1ZM521 226h1V277h-1ZM521 311h1V361h-1ZM522 225h1V276h-1ZM522 312h1V362h-1ZM523 224h1V275h-1ZM523 313h1V363h-1ZM524 222h1V274h-1ZM524 314h1V365h-1ZM525 221h1V273h-1ZM525 315h1V366h-1ZM526 220h1V271h-1ZM526 317h1V367h-1ZM527 219h1V270h-1ZM527 318h1V368h-1ZM528 218h1V269h-1ZM528 319h1V369h-1ZM529 216h1V268h-1ZM529 320h1V371h-1ZM530 215h1V266h-1ZM530 322h1V372h-1ZM531 214h1V265h-1ZM531 323h1V373h-1ZM532 213h1V264h-1ZM532 324h1V374h-1ZM533 211h1V263h-1ZM533 325h1V376h-1ZM534 210h1V261h-1ZM534 327h1V377h-1ZM535 209h1V260h-1ZM535 328h1V378h-1ZM536 207h1V258h-1ZM536 330h1V380h-1ZM537 206h1V257h-1ZM537 331h1V381h-1ZM538 204h1V256h-1ZM538 332h1V383h-1ZM539 203h1V254h-1ZM539 334h1V384h-1ZM540 201h1V253h-1ZM540 335h1V386h-1ZM541 200h1V251h-1ZM541 337h1V387h-1ZM542 198h1V250h-1ZM542 338h1V389h-1ZM543 197h1V248h-1ZM543 340h1V390h-1ZM544 195h1V246h-1ZM544 342h1V392h-1ZM545 193h1V245h-1ZM545 343h1V394h-1ZM546 192h1V243h-1ZM546 345h1V395h-1ZM547 191h1V242h-1ZM547 346h1V396h-1ZM548 191h1V242h-1ZM548 346h1V396h-1ZM549 191h1V242h-1ZM549 346h1V396h-1ZM550 191h1V242h-1ZM550 346h1V396h-1ZM551 191h1V242h-1ZM551 346h1V396h-1ZM552 191h1V242h-1ZM552 346h1V396h-1ZM553 191h1V242h-1ZM553 346h1V396h-1ZM554 191h1V242h-1ZM554 346h1V396h-1ZM555 191h1V242h-1ZM555 346h1V396h-1ZM556 191h1V242h-1ZM556 346h1V396h-1ZM557 191h1V242h-1ZM557 346h1V396h-1ZM558 191h1V242h-1ZM558 346h1V396h-1ZM559 191h1V242h-1ZM559 346h1V396h-1ZM560 191h1V242h-1ZM560 346h1V396h-1ZM561 191h1V242h-1ZM561 346h1V396h-1ZM562 191h1V242h-1ZM562 346h1V396h-1ZM563 191h1V242h-1ZM563 346h1V396h-1ZM564 191h1V242h-1ZM564 346h1V396h-1ZM565 191h1V242h-1ZM565 346h1V396h-1ZM566 191h1V242h-1ZM566 346h1V396h-1ZM567 191h1V242h-1ZM567 346h1V396h-1ZM568 191h1V242h-1ZM568 346h1V396h-1ZM569 191h1V242h-1ZM569 346h1V396h-1ZM570 191h1V242h-1ZM570 346h1V396h-1ZM571 191h1V242h-1ZM571 346h1V396h-1ZM572 191h1V242h-1ZM572 346h1V396h-1ZM573 191h1V242h-1ZM573 346h1V396h-1ZM574 191h1V242h-1ZM574 346h1V396h-1ZM575 191h1V242h-1ZM575 346h1V396h-1ZM576 191h1V242h-1ZM576 346h1V396h-1ZM577 191h1V242h-1ZM577 346h1V396h-1ZM578 191h1V242h-1ZM578 346h1V396h-1ZM579 191h1V242h-1ZM579 346h1V396h-1ZM580 191h1V242h-1ZM580 346h1V396h-1ZM581 191h1V242h-1ZM581 346h1V396h-1ZM582 191h1V242h-1ZM582 346h1V396h-1ZM583 191h1V242h-1ZM583 346h1V396h-1ZM584 191h1V242h-1ZM584 346h1V396h-1ZM585 191h1V242h-1ZM585 346h1V396h-1ZM586 191h1V242h-1ZM586 346h1V396h-1ZM587 191h1V242h-1ZM587 346h1V396h-1ZM588 191h1V242h-1ZM588 346h1V396h-1ZM589 191h1V242h-1ZM589 346h1V396h-1ZM590 191h1V242h-1ZM590 346h1V396h-1ZM591 191h1V242h-1ZM591 346h1V396h-1ZM592 191h1V242h-1ZM592 346h1V396h-1ZM593 191h1V242h-1ZM593 346h1V396h-1ZM594 191h1V242h-1ZM594 346h1V396h-1ZM595 191h1V242h-1ZM595 346h1V396h-1ZM596 191h1V242h-1ZM596 346h1V396h-1ZM597 191h1V242h-1ZM597 346h1V396h-1ZM598 191h1V242h-1ZM598 346h1V396h-1ZM599 191h1V242h-1ZM599 346h1V396h-1ZM600 191h1V242h-1ZM600 346h1V396h-1ZM601 191h1V242h-1ZM601 346h1V396h-1ZM602 191h1V242h-1ZM602 346h1V396h-1ZM603 191h1V242h-1ZM603 346h1V396h-1ZM604 191h1V242h-1ZM604 346h1V396h-1ZM605 191h1V242h-1ZM605 346h1V396h-1ZM606 191h1V242h-1ZM606 346h1V396h-1ZM607 191h1V242h-1ZM607 346h1V396h-1ZM608 191h1V242h-1ZM608 346h1V396h-1ZM609 191h1V242h-1ZM609 346h1V396h-1ZM610 191h1V242h-1ZM610 346h1V396h-1ZM611 191h1V242h-1ZM611 346h1V396h-1ZM612 191h1V242h-1ZM612 346h1V396h-1ZM613 191h1V242h-1ZM613 346h1V396h-1ZM614 191h1V242h-1ZM614 346h1V396h-1ZM615 191h1V242h-1ZM615 346h1V396h-1ZM616 191h1V242h-1ZM616 346h1V396h-1ZM617 191h1V242h-1ZM617 346h1V396h-1ZM618 191h1V242h-1ZM618 346h1V396h-1ZM619 191h1V242h-1ZM619 346h1V396h-1ZM620 191h1V242h-1ZM620 346h1V396h-1ZM621 191h1V242h-1ZM621 346h1V396h-1ZM622 191h1V242h-1ZM622 346h1V396h-1ZM623 191h1V242h-1ZM623 346h1V396h-1ZM624 191h1V242h-1ZM624 346h1V396h-1ZM625 191h1V242h-1ZM625 346h1V396h-1ZM626 191h1V242h-1ZM626 346h1V396h-1ZM627 191h1V242h-1ZM627 346h1V396h-1ZM628 191h1V242h-1ZM628 346h1V396h-1ZM629 191h1V242h-1ZM629 346h1V396h-1ZM630 191h1V242h-1ZM630 346h1V396h-1ZM631 191h1V242h-1ZM631 346h1V396h-1ZM632 191h1V242h-1ZM632 346h1V396h-1ZM633 191h1V242h-1ZM633 346h1V396h-1ZM634 191h1V242h-1ZM634 346h1V396h-1ZM635 191h1V242h-1ZM635 346h1V396h-1ZM636 191h1V242h-1ZM636 346h1V396h-1Z"/><path fill="#3232c8" d="M141 267h1V321h-1ZM142 266h1V320h-1ZM143 267h1V321h-1ZM144 267h1V322h-1ZM145 268h1V319h-1ZM146 267h1V322h-1ZM147 266h1V320h-1ZM148 266h1V321h-1ZM149 266h1V320h-1ZM150 266h1V320h-1ZM151 266h1V320h-1ZM152 278h1V310h-1ZM153 266h1V321h-1ZM154 268h1V320h-1ZM155 268h1V319h-1ZM156 267h1V321h-1ZM157 267h1V321h-1ZM158 268h1V320h-1ZM159 267h1V320h-1ZM160 266h1V319h-1ZM161 267h1V320h-1ZM162 268h1V321h-1ZM163 266h1V320h-1ZM164 268h1V320h-1ZM165 265h1V320h-1ZM166 264h1V319h-1ZM167 267h1V319h-1ZM168 268h1V320h-1ZM169 267h1V319h-1ZM170 266h1V321h-1ZM171 268h1V320h-1ZM172 266h1V322h-1ZM173 268h1V319h-1ZM174 264h1V321h-1ZM175 266h1V320h-1ZM176 266h1V320h-1ZM177 268h1V319h-1ZM178 266h1V321h-1ZM179 266h1V321h-1ZM180 266h1V320h-1ZM181 268h1V320h-1ZM182 267h1V321h-1ZM183 267h1V319h-1ZM184 268h1V320h-1ZM185 267h1V321h-1ZM186 266h1V320h-1ZM187 267h1V320h-1ZM188 267h1V322h-1ZM189 267h1V322h-1ZM190 266h1V320h-1ZM191 268h1V321h-1ZM192 268h1V322h-1ZM193 268h1V320h-1ZM194 266h1V319h-1ZM195 264h1V321h-1ZM196 266h1V320h-1ZM197 267h1V322h-1ZM198 264h1V323h-1ZM199 268h1V322h-1ZM200 268h1V322h-1ZM201 268h1V319h-1ZM202 268h1V320h-1ZM203 267h1V322h-1ZM204 266h1V321h-1ZM205 266h1V320h-1ZM206 266h1V322h-1ZM207 265h1V320h-1ZM208 265h1V320h-1ZM209 268h1V320h-1ZM210 268h1V322h-1ZM211 265h1V320h-1ZM212 266h1V321h-1ZM213 268h1V319h-1ZM214 266h1V321h-1ZM215 266h1V319h-1ZM216 266h1V321h-1ZM217 267h1V321h-1ZM218 267h1V323h-1ZM219 269h1V321h-1ZM220 268h1V319h-1ZM221 267h1V319h-1ZM222 267h1V319h-1ZM223 268h1V321h-1ZM224 269h1V319h-1ZM225 269h1V319h-1ZM226 268h1V320h-1ZM227 264h1V321h-1ZM228 268h1V319h-1ZM229 270h1V319h-1ZM230 268h1V319h-1ZM231 271h1V319h-1ZM232 268h1V319h-1ZM233 269h1V318h-1ZM234 270h1V318h-1ZM235 272h1V318h-1ZM236 272h1V316h-1ZM237 272h1V317h-1ZM238 272h1V316h-1ZM239 272h1V315h-1ZM240 272h1V314h-1ZM241 275h1V314h-1ZM242 273h1V315h-1ZM243 275h1V313h-1ZM244 275h1V313h-1ZM245 276h1V313h-1ZM246 275h1V312h-1ZM247 276h1V315h-1ZM248 276h1V313h-1ZM249 277h1V312h-1ZM250 278h1V311h-1ZM251 277h1V311h-1ZM252 278h1V310h-1ZM253 280h1V309h-1ZM254 279h1V309h-1ZM255 279h1V309h-1ZM257 281h1V309h-1ZM258 282h1V303h-1ZM259 281h1V303h-1ZM260 283h1V305h-1ZM261 282h1V305h-1ZM262 284h1V302h-1ZM263 283h1V304h-1ZM264 283h1V302h-1ZM265 284h1V302h-1ZM266 283h1V302h-1ZM267 285h1V302h-1ZM268 283h1V301h-1ZM269 285h1V301h-1ZM270 285h1V301h-1ZM271 284h1V301h-1ZM272 284h1V300h-1ZM273 285h1V301h-1ZM274 285h1V301h-1ZM275 286h1V300h-1ZM276 285h1V300h-1ZM277 285h1V301h-1ZM278 285h1V300h-1ZM279 285h1V301h-1ZM280 286h1V300h-1ZM281 287h1V301h-1ZM282 286h1V300h-1ZM283 286h1V301h-1ZM284 287h1V299h-1ZM285 286h1V300h-1ZM286 286h1V300h-1ZM287 287h1V300h-1ZM288 286h1V299h-1ZM289 287h1V299h-1ZM290 287h1V300h-1ZM291 287h1V300h-1ZM292 287h1V299h-1ZM293 287h1V300h-1ZM294 288h1V299h-1ZM295 287h1V299h-1ZM296 288h1V299h-1ZM297 286h1V301h-1ZM298 286h1V299h-1ZM299 287h1V299h-1ZM300 287h1V299h-1ZM301 288h1V300h-1ZM302 287h1V299h-1ZM303 288h1V299h-1ZM304 288h1V298h-1ZM305 288h1V298h-1ZM306 288h1V298h-1ZM307 288h1V298h-1ZM308 288h1V299h-1ZM309 288h1V299h-1ZM310 289h1V299h-1ZM311 288h1V298h-1ZM312 288h1V299h-1ZM313 288h1V299h-1ZM314 288h1V299h-1ZM315 289h1V299h-1ZM316 288h1V299h-1ZM317 288h1V298h-1ZM318 289h1V300h-1ZM319 288h1V299h-1ZM320 287h1V298h-1ZM321 289h1V299h-1ZM322 289h1V299h-1ZM323 288h1V299h-1ZM324 289h1V299h-1ZM325 288h1V299h-1ZM326 288h1V299h-1ZM327 289h1V299h-1ZM328 288h1V299h-1ZM329 289h1V299h-1ZM330 289h1V299h-1ZM331 288h1V299h-1ZM332 288h1V299h-1ZM333 288h1V298h-1ZM334 288h1V299h-1ZM335 288h1V299h-1ZM336 288h1V299h-1ZM337 289h1V299h-1ZM338 292h1V294h-1ZM339 292h1V294h-1ZM340 292h1V294h-1ZM341 288h1V300h-1ZM342 288h1V300h-1ZM343 289h1V299h-1ZM344 289h1V299h-1ZM345 288h1V299h-1ZM346 288h1V300h-1ZM347 288h1V299h-1ZM348 287h1V300h-1ZM349 289h1V299h-1ZM350 288h1V299h-1ZM351 289h1V300h-1ZM352 288h1V299h-1ZM353 289h1V299h-1ZM354 289h1V299h-1ZM355 288h1V299h-1ZM356 289h1V299h-1ZM357 288h1V299h-1ZM358 289h1V299h-1ZM359 288h1V299h-1ZM360 289h1V299h-1ZM361 289h1V299h-1ZM362 288h1V300h-1ZM363 289h1V299h-1ZM364 288h1V300h-1ZM365 288h1V300h-1ZM366 288h1V299h-1ZM367 288h1V299h-1ZM368 288h1V300h-1ZM369 287h1V300h-1ZM370 288h1V299h-1ZM371 288h1V299h-1ZM372 289h1V300h-1ZM373 288h1V299h-1ZM374 288h1V300h-1ZM375 288h1V299h-1ZM376 289h1V300h-1ZM377 289h1V300h-1ZM378 288h1V299h-1ZM379 288h1V299h-1ZM380 289h1V300h-1ZM381 288h1V299h-1ZM382 289h1V300h-1ZM383 287h1V299h-1ZM384 289h1V299h-1ZM385 288h1V300h-1ZM386 288h1V300h-1ZM387 288h1V300h-1ZM388 289h1V300h-1ZM389 288h1V299h-1ZM390 288h1V299h-1ZM391 288h1V299h-1ZM392 288h1V300h-1ZM393 288h1V299h-1ZM394 288h1V299h-1ZM395 288h1V299h-1ZM396 288h1V299h-1ZM397 288h1V299h-1ZM398 289h1V300h-1ZM399 289h1V299h-1ZM400 288h1V299h-1ZM401 288h1V299h-1ZM402 289h1V299h-1ZM403 288h1V300h-1ZM404 288h1V299h-1ZM405 289h1V299h-1ZM406 289h1V299h-1ZM407 288h1V299h-1ZM408 289h1V300h-1ZM409 289h1V299h-1ZM410 289h1V300h-1ZM411 288h1V300h-1ZM412 287h1V299h-1ZM413 288h1V300h-1ZM414 288h1V299h-1ZM415 288h1V299h-1ZM416 288h1V300h-1ZM417 288h1V300h-1ZM418 288h1V299h-1ZM419 288h1V300h-1ZM420 288h1V299h-1ZM421 288h1V300h-1ZM422 288h1V300h-1ZM423 289h1V300h-1ZM424 288h1V299h-1ZM425 289h1V300h-1ZM426 288h1V299h-1ZM427 289h1V300h-1ZM428 289h1V299h-1ZM429 288h1V299h-1ZM430 289h1V300h-1ZM431 288h1V299h-1ZM432 288h1V299h-1ZM433 288h1V300h-1ZM434 288h1V299h-1ZM435 288h1V300h-1ZM436 288h1V301h-1ZM437 288h1V301h-1ZM438 287h1V300h-1ZM439 288h1V299h-1ZM440 288h1V299h-1ZM441 288h1V299h-1ZM442 288h1V300h-1ZM443 289h1V300h-1ZM444 288h1V299h-1ZM445 288h1V299h-1ZM446 288h1V299h-1ZM447 288h1V300h-1ZM448 288h1V299h-1ZM449 288h1V300h-1ZM450 287h1V299h-1ZM451 287h1V300h-1ZM452 288h1V299h-1ZM453 288h1V300h-1ZM454 287h1V300h-1ZM455 287h1V300h-1ZM456 287h1V299h-1ZM457 287h1V299h-1ZM458 288h1V300h-1ZM459 288h1V300h-1ZM460 287h1V300h-1ZM461 288h1V300h-1ZM462 287h1V299h-1ZM463 287h1V300h-1ZM464 288h1V300h-1ZM465 285h1V300h-1ZM466 287h1V300h-1ZM467 287h1V300h-1ZM468 287h1V300h-1ZM469 286h1V300h-1ZM470 285h1V301h-1ZM471 285h1V302h-1ZM472 286h1V300h-1ZM473 285h1V302h-1ZM474 285h1V300h-1ZM475 285h1V302h-1ZM476 284h1V301h-1ZM477 284h1V302h-1ZM478 286h1V301h-1ZM479 285h1V302h-1ZM480 285h1V302h-1ZM481 285h1V302h-1ZM482 285h1V302h-1ZM483 284h1V303h-1ZM484 283h1V302h-1ZM485 285h1V302h-1ZM486 284h1V303h-1ZM487 283h1V303h-1ZM488 282h1V303h-1ZM489 283h1V304h-1ZM490 283h1V303h-1ZM491 283h1V303h-1ZM492 283h1V303h-1ZM493 283h1V302h-1ZM494 282h1V302h-1ZM495 288h1V299h-1ZM496 288h1V299h-1ZM497 288h1V299h-1ZM498 288h1V299h-1ZM499 288h1V299h-1ZM500 289h1V299h-1ZM501 288h1V299h-1ZM502 289h1V299h-1ZM503 288h1V299h-1ZM504 288h1V299h-1ZM505 288h1V299h-1ZM506 288h1V299h-1ZM507 289h1V298h-1ZM508 288h1V299h-1ZM509 275h1V314h-1ZM510 276h1V316h-1ZM511 276h1V316h-1ZM512 275h1V314h-1ZM513 274h1V315h-1ZM514 275h1V315h-1ZM515 274h1V317h-1ZM516 272h1V316h-1ZM517 273h1V315h-1ZM518 274h1V322h-1ZM519 273h1V317h-1ZM520 272h1V318h-1ZM521 272h1V319h-1ZM522 272h1V317h-1ZM523 272h1V317h-1ZM524 271h1V318h-1ZM525 271h1V318h-1ZM526 271h1V319h-1ZM527 271h1V318h-1ZM528 271h1V319h-1ZM529 265h1V319h-1ZM530 270h1V320h-1ZM531 269h1V319h-1ZM532 270h1V319h-1ZM533 270h1V320h-1ZM534 268h1V320h-1ZM535 267h1V328h-1ZM536 269h1V321h-1ZM537 267h1V320h-1ZM538 268h1V321h-1ZM539 266h1V323h-1ZM540 267h1V322h-1ZM541 266h1V324h-1ZM542 260h1V322h-1ZM543 266h1V322h-1ZM544 266h1V323h-1ZM545 266h1V324h-1ZM546 266h1V324h-1ZM547 266h1V323h-1ZM548 266h1V325h-1ZM549 265h1V330h-1ZM550 266h1V325h-1ZM551 265h1V331h-1ZM552 264h1V326h-1ZM553 266h1V326h-1ZM554 264h1V327h-1ZM555 265h1V324h-1ZM556 265h1V334h-1ZM557 264h1V326h-1ZM558 266h1V325h-1ZM559 265h1V335h-1ZM560 264h1V324h-1ZM561 265h1V327h-1ZM562 264h1V328h-1ZM563 264h1V326h-1ZM564 263h1V328h-1ZM565 263h1V325h-1ZM566 263h1V327h-1ZM567 266h1V326h-1ZM568 265h1V328h-1ZM569 265h1V326h-1ZM570 265h1V326h-1ZM571 285h1V303h-1ZM572 285h1V303h-1ZM573 285h1V302h-1ZM574 285h1V302h-1ZM575 285h1V302h-1ZM576 285h1V302h-1ZM577 285h1V303h-1ZM578 285h1V303h-1ZM579 285h1V305h-1ZM580 285h1V303h-1ZM581 286h1V302h-1ZM582 286h1V303h-1ZM583 285h1V302h-1ZM584 285h1V302h-1ZM585 285h1V302h-1ZM586 285h1V302h-1ZM587 286h1V302h-1ZM588 286h1V302h-1ZM589 286h1V304h-1ZM590 286h1V301h-1ZM591 286h1V302h-1ZM592 286h1V302h-1ZM593 286h1V301h-1ZM594 286h1V302h-1ZM595 286h1V301h-1ZM596 286h1V301h-1ZM597 286h1V302h-1ZM598 286h1V301h-1ZM599 286h1V301h-1ZM600 286h1V301h-1ZM601 288h1V299h-1ZM602 290h1V297h-1ZM603 270h1V318h-1ZM604 270h1V313h-1ZM605 273h1V316h-1ZM606 272h1V317h-1ZM607 268h1V315h-1ZM608 270h1V320h-1ZM609 268h1V313h-1ZM610 273h1V320h-1ZM611 270h1V317h-1ZM612 269h1V315h-1ZM613 269h1V320h-1ZM614 273h1V314h-1ZM615 268h1V321h-1ZM616 274h1V317h-1ZM617 273h1V315h-1ZM618 269h1V316h-1ZM619 269h1V318h-1ZM620 274h1V319h-1ZM621 282h1V306h-1ZM622 269h1V320h-1ZM623 269h1V325h-1ZM624 264h1V319h-1ZM625 267h1V324h-1ZM626 266h1V324h-1ZM627 264h1V319h-1ZM628 262h1V325h-1ZM629 269h1V326h-1ZM630 264h1V332h-1ZM631 264h1V318h-1ZM632 269h1V326h-1ZM633 268h1V321h-1ZM634 265h1V319h-1ZM635 267h1V326h-1ZM636 260h1V319h-1Z"/><path fill="#6464dc" d="M141 286h1V298h-1ZM142 287h1V298h-1ZM143 286h1V299h-1ZM144 286h1V298h-1ZM145 287h1V299h-1ZM146 287h1V298h-1ZM147 287h1V298h-1ZM148 286h1V299h-1ZM149 287h1V299h-1ZM150 286h1V299h-1ZM151 286h1V298h-1ZM152 287h1V299h-1ZM153 285h1V302h-1ZM154 285h1V302h-1ZM155 285h1V301h-1ZM156 285h1V301h-1ZM157 285h1V301h-1ZM158 285h1V301h-1ZM159 284h1V302h-1ZM160 284h1V302h-1ZM161 285h1V301h-1ZM162 285h1V301h-1ZM163 284h1V301h-1ZM164 284h1V302h-1ZM165 285h1V301h-1ZM166 284h1V301h-1ZM167 284h1V302h-1ZM168 284h1V302h-1ZM169 284h1V302h-1ZM170 285h1V301h-1ZM171 284h1V302h-1ZM172 285h1V301h-1ZM173 284h1V302h-1ZM174 284h1V302h-1ZM175 285h1V302h-1ZM176 284h1V301h-1ZM177 285h1V302h-1ZM178 285h1V301h-1ZM179 285h1V302h-1ZM180 285h1V302h-1ZM181 285h1V302h-1ZM182 284h1V302h-1ZM183 285h1V302h-1ZM184 285h1V302h-1ZM185 285h1V301h-1ZM186 284h1V302h-1ZM187 285h1V302h-1ZM188 284h1V301h-1ZM189 285h1V302h-1ZM190 284h1V303h-1ZM191 284h1V303h-1ZM192 284h1V302h-1ZM193 285h1V302h-1ZM194 285h1V302h-1ZM195 284h1V303h-1ZM196 285h1V301h-1ZM197 285h1V303h-1ZM198 284h1V302h-1ZM199 285h1V303h-1ZM200 284h1V303h-1ZM201 285h1V301h-1ZM202 284h1V302h-1ZM203 285h1V301h-1ZM204 284h1V301h-1ZM205 285h1V302h-1ZM206 284h1V302h-1ZM207 285h1V302h-1ZM208 286h1V300h-1ZM209 286h1V301h-1ZM210 285h1V303h-1ZM211 285h1V302h-1ZM212 285h1V302h-1ZM213 284h1V302h-1ZM214 285h1V302h-1ZM215 285h1V303h-1ZM216 285h1V302h-1ZM217 284h1V303h-1ZM218 285h1V302h-1ZM219 284h1V302h-1ZM220 284h1V302h-1ZM221 285h1V302h-1ZM222 285h1V302h-1ZM223 284h1V301h-1ZM224 284h1V301h-1ZM225 284h1V302h-1ZM226 286h1V300h-1ZM227 288h1V298h-1ZM228 289h1V298h-1ZM229 288h1V298h-1ZM230 289h1V297h-1ZM231 289h1V298h-1ZM232 288h1V297h-1ZM233 289h1V298h-1ZM234 289h1V297h-1ZM235 289h1V297h-1ZM236 289h1V298h-1ZM237 289h1V297h-1ZM238 289h1V297h-1ZM239 289h1V298h-1ZM240 289h1V297h-1ZM241 289h1V297h-1ZM242 290h1V297h-1ZM243 289h1V297h-1ZM244 289h1V297h-1ZM245 289h1V297h-1ZM246 290h1V297h-1ZM247 290h1V297h-1ZM248 290h1V297h-1ZM249 290h1V297h-1ZM250 290h1V297h-1ZM251 290h1V297h-1ZM252 290h1V297h-1ZM253 290h1V296h-1ZM254 290h1V297h-1ZM255 290h1V297h-1ZM256 290h1V296h-1ZM257 291h1V296h-1ZM258 291h1V296h-1ZM259 291h1V296h-1ZM260 291h1V296h-1ZM261 291h1V296h-1ZM262 291h1V296h-1ZM263 291h1V296h-1ZM264 291h1V296h-1ZM265 291h1V296h-1ZM266 291h1V296h-1ZM267 291h1V296h-1ZM268 291h1V296h-1ZM269 291h1V296h-1ZM270 291h1V296h-1ZM271 291h1V296h-1ZM272 291h1V296h-1ZM273 291h1V295h-1ZM274 291h1V295h-1ZM275 292h1V296h-1ZM276 292h1V296h-1ZM277 292h1V295h-1ZM278 292h1V296h-1ZM279 291h1V295h-1ZM280 292h1V295h-1ZM281 292h1V296h-1ZM282 291h1V295h-1ZM283 292h1V295h-1ZM284 292h1V295h-1ZM285 292h1V295h-1ZM286 292h1V295h-1ZM287 292h1V295h-1ZM288 292h1V295h-1ZM289 292h1V295h-1ZM290 292h1V295h-1ZM291 292h1V295h-1ZM292 292h1V295h-1ZM293 292h1V295h-1ZM294 292h1V295h-1ZM295 292h1V295h-1ZM296 292h1V295h-1ZM297 292h1V295h-1ZM298 292h1V295h-1ZM299 292h1V295h-1ZM300 292h1V295h-1ZM301 292h1V295h-1ZM302 292h1V295h-1ZM303 292h1V295h-1ZM304 292h1V295h-1ZM305 292h1V295h-1ZM306 292h1V295h-1ZM307 292h1V295h-1ZM308 292h1V295h-1ZM309 292h1V295h-1ZM310 292h1V295h-1ZM311 292h1V295h-1ZM312 292h1V295h-1ZM313 292h1V295h-1ZM314 292h1V295h-1ZM315 292h1V295h-1ZM316 292h1V295h-1ZM317 292h1V295h-1ZM318 292h1V295h-1ZM319 292h1V295h-1ZM320 292h1V295h-1ZM321 292h1V295h-1ZM322 292h1V295h-1ZM323 292h1V295h-1ZM324 292h1V295h-1ZM325 292h1V295h-1ZM326 292h1V295h-1ZM327 292h1V295h-1ZM328 292h1V295h-1ZM329 292h1V295h-1ZM330 292h1V295h-1ZM331 292h1V295h-1ZM332 292h1V295h-1ZM333 292h1V295h-1ZM334 292h1V295h-1ZM335 292h1V295h-1ZM336 292h1V295h-1ZM337 292h1V295h-1ZM338 292h1V295h-1ZM339 292h1V295h-1ZM340 292h1V295h-1ZM341 292h1V295h-1ZM342 292h1V295h-1ZM343 292h1V295h-1ZM344 292h1V295h-1ZM345 292h1V295h-1ZM346 292h1V295h-1ZM347 292h1V295h-1ZM348 292h1V295h-1ZM349 292h1V295h-1ZM350 292h1V295h-1ZM351 292h1V295h-1ZM352 292h1V295h-1ZM353 292h1V295h-1ZM354 292h1V295h-1ZM355 292h1V295h-1ZM356 292h1V295h-1ZM357 292h1V295h-1ZM358 292h1V295h-1ZM359 292h1V295h-1ZM360 292h1V295h-1ZM361 292h1V295h-1ZM362 292h1V295h-1ZM363 292h1V295h-1ZM364 292h1V295h-1ZM365 292h1V295h-1ZM366 292h1V295h-1ZM367 292h1V295h-1ZM368 292h1V295h-1ZM369 292h1V295h-1ZM370 292h1V295h-1ZM371 292h1V295h-1ZM372 292h1V295h-1ZM373 292h1V295h-1ZM374 292h1V295h-1ZM375 292h1V295h-1ZM376 292h1V295h-1ZM377 292h1V295h-1ZM378 292h1V295h-1ZM379 292h1V295h-1ZM380 292h1V295h-1ZM381 292h1V295h-1ZM382 292h1V295h-1ZM383 292h1V295h-1ZM384 292h1V295h-1ZM385 292h1V295h-1ZM386 292h1V295h-1ZM387 292h1V295h-1ZM388 292h1V295h-1ZM389 292h1V295h-1ZM390 292h1V295h-1ZM391 292h1V295h-1ZM392 292h1V295h-1ZM393 292h1V295h-1ZM394 292h1V295h-1ZM395 292h1V295h-1ZM396 292h1V295h-1ZM397 292h1V295h-1ZM398 292h1V295h-1ZM399 292h1V295h-1ZM400 292h1V295h-1ZM401 292h1V295h-1ZM402 292h1V295h-1ZM403 292h1V295h-1ZM404 292h1V295h-1ZM405 292h1V295h-1ZM406 292h1V295h-1ZM407 292h1V295h-1ZM408 292h1V295h-1ZM409 292h1V295h-1ZM410 292h1V295h-1ZM411 292h1V295h-1ZM412 292h1V295h-1ZM413 292h1V295h-1ZM414 292h1V295h-1ZM415 292h1V295h-1ZM416 292h1V295h-1ZM417 292h1V295h-1ZM418 292h1V295h-1ZM419 292h1V295h-1ZM420 292h1V295h-1ZM421 292h1V295h-1ZM422 292h1V295h-1ZM423 292h1V295h-1ZM424 292h1V295h-1ZM425 292h1V295h-1ZM426 292h1V295h-1ZM427 292h1V295h-1ZM428 292h1V295h-1ZM429 292h1V295h-1ZM430 292h1V295h-1ZM431 292h1V295h-1ZM432 292h1V295h-1ZM433 292h1V295h-1ZM434 292h1V295h-1ZM435 292h1V295h-1ZM436 292h1V295h-1ZM437 292h1V295h-1ZM438 292h1V295h-1ZM439 292h1V295h-1ZM440 292h1V295h-1ZM441 292h1V295h-1ZM442 292h1V295h-1ZM443 292h1V295h-1ZM444 292h1V295h-1ZM445 292h1V295h-1ZM446 292h1V295h-1ZM447 292h1V295h-1ZM448 292h1V295h-1ZM449 292h1V295h-1ZM450 292h1V295h-1ZM451 292h1V295h-1ZM452 292h1V295h-1ZM453 292h1V295h-1ZM454 292h1V295h-1ZM455 292h1V295h-1ZM456 292h1V295h-1ZM457 292h1V295h-1ZM458 292h1V295h-1ZM459 292h1V295h-1ZM460 292h1V295h-1ZM461 292h1V295h-1ZM462 292h1V295h-1ZM463 292h1V295h-1ZM464 292h1V295h-1ZM465 292h1V295h-1ZM466 292h1V296h-1ZM467 291h1V296h-1ZM468 292h1V296h-1ZM469 292h1V296h-1ZM470 292h1V296h-1ZM471 291h1V295h-1ZM472 292h1V295h-1ZM473 291h1V296h-1ZM474 291h1V296h-1ZM475 291h1V296h-1ZM476 292h1V296h-1ZM477 291h1V296h-1ZM478 291h1V296h-1ZM479 291h1V296h-1ZM480 291h1V296h-1ZM481 291h1V296h-1ZM482 291h1V296h-1ZM483 291h1V296h-1ZM484 291h1V296h-1ZM485 291h1V296h-1ZM486 291h1V296h-1ZM487 291h1V296h-1ZM488 291h1V296h-1ZM489 291h1V296h-1ZM490 291h1V296h-1ZM491 291h1V296h-1ZM492 291h1V296h-1ZM493 291h1V296h-1ZM494 291h1V296h-1ZM495 292h1V295h-1ZM496 292h1V295h-1ZM497 292h1V295h-1ZM498 292h1V295h-1ZM499 292h1V295h-1ZM500 292h1V295h-1ZM501 292h1V295h-1ZM502 292h1V295h-1ZM503 292h1V295h-1ZM504 292h1V295h-1ZM505 292h1V295h-1ZM506 292h1V295h-1ZM507 292h1V295h-1ZM508 292h1V295h-1ZM509 289h1V298h-1ZM510 288h1V298h-1ZM511 288h1V299h-1ZM512 288h1V299h-1ZM513 288h1V299h-1ZM514 288h1V299h-1ZM515 288h1V299h-1ZM516 288h1V299h-1ZM517 288h1V299h-1ZM518 288h1V299h-1ZM519 287h1V299h-1ZM520 288h1V300h-1ZM521 288h1V299h-1ZM522 287h1V300h-1ZM523 287h1V299h-1ZM524 287h1V300h-1ZM525 288h1V300h-1ZM526 287h1V300h-1ZM527 288h1V300h-1ZM528 286h1V301h-1ZM529 287h1V300h-1ZM530 286h1V300h-1ZM531 286h1V301h-1ZM532 287h1V300h-1ZM533 286h1V301h-1ZM534 287h1V300h-1ZM535 286h1V301h-1ZM536 287h1V301h-1ZM537 286h1V301h-1ZM538 286h1V301h-1ZM539 287h1V301h-1ZM540 286h1V300h-1ZM541 285h1V301h-1ZM542 286h1V301h-1ZM543 286h1V301h-1ZM544 286h1V302h-1ZM545 286h1V302h-1ZM546 285h1V302h-1ZM547 286h1V301h-1ZM548 286h1V301h-1ZM549 285h1V302h-1ZM550 286h1V301h-1ZM551 285h1V302h-1ZM552 286h1V301h-1ZM553 286h1V302h-1ZM554 285h1V302h-1ZM555 285h1V302h-1ZM556 285h1V302h-1ZM557 285h1V301h-1ZM558 285h1V301h-1ZM559 285h1V301h-1ZM560 284h1V301h-1ZM561 285h1V301h-1ZM562 285h1V301h-1ZM563 285h1V301h-1ZM564 284h1V302h-1ZM565 285h1V302h-1ZM566 285h1V302h-1ZM567 285h1V302h-1ZM568 284h1V301h-1ZM569 285h1V302h-1ZM570 285h1V302h-1ZM571 292h1V296h-1ZM572 292h1V296h-1ZM573 292h1V296h-1ZM574 292h1V296h-1ZM575 292h1V296h-1ZM576 292h1V296h-1ZM577 292h1V296h-1ZM578 292h1V296h-1ZM579 292h1V296h-1ZM580 292h1V296h-1ZM581 292h1V296h-1ZM582 292h1V296h-1ZM583 292h1V296h-1ZM584 292h1V296h-1ZM585 292h1V296h-1ZM586 292h1V296h-1ZM587 292h1V295h-1ZM588 292h1V296h-1ZM589 292h1V296h-1ZM590 292h1V296h-1ZM591 292h1V295h-1ZM592 292h1V296h-1ZM593 292h1V296h-1ZM594 292h1V296h-1ZM595 292h1V296h-1ZM596 292h1V295h-1ZM597 292h1V295h-1ZM598 292h1V296h-1ZM599 292h1V295h-1ZM600 292h1V296h-1ZM601 292h1V295h-1ZM602 293h1V294h-1ZM603 284h1V302h-1ZM604 285h1V301h-1ZM605 284h1V301h-1ZM606 284h1V301h-1ZM607 285h1V301h-1ZM608 284h1V302h-1ZM609 285h1V301h-1ZM610 284h1V301h-1ZM611 284h1V301h-1ZM612 284h1V301h-1ZM613 284h1V302h-1ZM614 284h1V301h-1ZM615 285h1V301h-1ZM616 284h1V301h-1ZM617 285h1V301h-1ZM618 284h1V301h-1ZM619 285h1V302h-1ZM620 285h1V302h-1ZM621 290h1V297h-1ZM622 283h1V301h-1ZM623 284h1V301h-1ZM624 284h1V300h-1ZM625 283h1V300h-1ZM626 284h1V301h-1ZM627 284h1V300h-1ZM628 284h1V301h-1ZM629 284h1V301h-1ZM630 284h1V301h-1ZM631 284h1V300h-1ZM632 284h1V300h-1ZM633 284h1V301h-1ZM634 283h1V300h-1ZM635 284h1V300h-1ZM636 284h1V301h-1Z"/><path fill="#6464dc" d="M141 223h1V226h-1ZM142 223h1V226h-1ZM143 223h1V226h-1ZM144 223h1V226h-1ZM145 223h1V226h-1ZM146 223h1V226h-1ZM147 223h1V226h-1ZM148 223h1V226h-1ZM149 223h1V226h-1ZM150 223h1V226h-1ZM151 223h1V226h-1ZM152 223h1V226h-1ZM153 223h1V226h-1ZM154 223h1V226h-1ZM155 223h1V226h-1ZM156 223h1V226h-1ZM157 223h1V226h-1ZM158 223h1V226h-1ZM159 223h1V226h-1ZM160 223h1V226h-1ZM161 223h1V226h-1ZM162 223h1V226h-1ZM163 223h1V226h-1ZM164 223h1V226h-1ZM165 223h1V226h-1ZM166 223h1V226h-1ZM167 223h1V226h-1ZM168 223h1V226h-1ZM169 223h1V226h-1ZM170 223h1V226h-1ZM171 223h1V226h-1ZM172 223h1V226h-1ZM173 223h1V226h-1ZM174 223h1V226h-1ZM175 223h1V226h-1ZM176 223h1V226h-1ZM177 223h1V226h-1ZM178 223h1V226h-1ZM179 223h1V226h-1ZM180 223h1V226h-1ZM181 223h1V226h-1ZM182 223h1V226h-1ZM183 223h1V226h-1ZM184 223h1V226h-1ZM185 223h1V226h-1ZM186 223h1V226h-1ZM187 223h1V226h-1ZM188 223h1V226h-1ZM189 223h1V226h-1ZM190 223h1V226h-1ZM191 223h1V226h-1ZM192 223h1V226h-1ZM193 223h1V226h-1ZM194 223h1V226h-1ZM195 223h1V226h-1ZM196 223h1V226h-1ZM197 223h1V226h-1ZM198 223h1V226h-1ZM199 223h1V226h-1ZM200 223h1V226h-1ZM201 223h1V226h-1ZM202 223h1V226h-1ZM203 223h1V226h-1ZM204 223h1V226h-1ZM205 223h1V226h-1ZM206 223h1V226h-1ZM207 223h1V226h-1ZM208 223h1V226h-1ZM209 223h1V226h-1ZM210 223h1V226h-1ZM211 223h1V226h-1ZM212 223h1V226h-1ZM213 223h1V226h-1ZM214 223h1V226h-1ZM215 223h1V226h-1ZM216 223h1V226h-1ZM217 223h1V226h-1ZM218 223h1V226h-1ZM219 223h1V226h-1ZM220 223h1V226h-1ZM221 223h1V226h-1ZM222 223h1V226h-1ZM223 223h1V227h-1ZM224 224h1V228h-1ZM225 226h1V229h-1ZM226 227h1V230h-1ZM227 228h1V231h-1ZM228 229h1V232h-1ZM229 230h1V233h-1ZM230 231h1V234h-1ZM231 232h1V235h-1ZM232 233h1V236h-1ZM233 234h1V237h-1ZM234 235h1V238h-1ZM235 236h1V239h-1ZM236 237h1V240h-1ZM237 237h1V241h-1ZM238 238h1V242h-1ZM239 239h1V243h-1ZM240 240h1V243h-1ZM241 241h1V244h-1ZM242 242h1V245h-1ZM243 243h1V246h-1ZM244 243h1V247h-1ZM245 244h1V248h-1ZM246 245h1V248h-1ZM247 246h1V249h-1ZM248 246h1V250h-1ZM249 247h1V251h-1ZM250 248h1V251h-1ZM251 249h1V252h-1ZM252 249h1V253h-1ZM253 250h1V253h-1ZM254 251h1V254h-1ZM255 251h1V255h-1ZM256 252h1V255h-1ZM257 253h1V256h-1ZM258 253h1V257h-1ZM259 254h1V257h-1ZM260 255h1V258h-1ZM261 255h1V259h-1ZM262 256h1V259h-1ZM263 256h1V260h-1ZM264 257h1V260h-1ZM265 258h1V261h-1ZM266 258h1V261h-1ZM267 259h1V262h-1ZM268 259h1V263h-1ZM269 260h1V263h-1ZM270 260h1V264h-1ZM271 261h1V264h-1ZM272 261h1V265h-1ZM273 262h1V265h-1ZM274 262h1V266h-1ZM275 263h1V266h-1ZM276 263h1V267h-1ZM277 264h1V267h-1ZM278 264h1V268h-1ZM279 265h1V268h-1ZM280 265h1V268h-1ZM281 266h1V269h-1ZM282 266h1V269h-1ZM283 267h1V270h-1ZM284 267h1V270h-1ZM285 267h1V271h-1ZM286 268h1V271h-1ZM287 268h1V271h-1ZM288 269h1V272h-1ZM289 269h1V272h-1ZM290 269h1V273h-1ZM291 270h1V273h-1ZM292 270h1V273h-1ZM293 270h1V274h-1ZM294 271h1V274h-1ZM295 271h1V274h-1ZM296 272h1V275h-1ZM297 272h1V275h-1ZM298 272h1V275h-1ZM299 273h1V276h-1ZM300 273h1V276h-1ZM301 273h1V276h-1ZM302 273h1V277h-1ZM303 274h1V277h-1ZM304 274h1V277h-1ZM305 274h1V278h-1ZM306 275h1V278h-1ZM307 275h1V278h-1ZM308 275h1V278h-1ZM309 276h1V279h-1ZM310 276h1V279h-1ZM311 276h1V279h-1ZM312 276h1V279h-1ZM313 276h1V279h-1ZM314 276h1V279h-1ZM315 276h1V279h-1ZM316 276h1V279h-1ZM317 276h1V279h-1ZM318 276h1V279h-1ZM319 276h1V279h-1ZM320 276h1V279h-1ZM321 276h1V279h-1ZM322 276h1V279h-1ZM323 276h1V279h-1ZM324 276h1V279h-1ZM325 276h1V279h-1ZM326 276h1V279h-1ZM327 276h1V279h-1ZM328 276h1V279h-1ZM329 276h1V279h-1ZM330 276h1V279h-1ZM331 276h1V279h-1ZM332 276h1V279h-1ZM333 276h1V279h-1ZM334 276h1V279h-1ZM335 276h1V279h-1ZM336 276h1V279h-1ZM337 276h1V279h-1ZM338 276h1V279h-1ZM339 276h1V279h-1ZM340 276h1V279h-1ZM341 276h1V279h-1ZM342 276h1V279h-1ZM343 276h1V279h-1ZM344 276h1V279h-1ZM345 276h1V279h-1ZM346 276h1V279h-1ZM347 276h1V279h-1ZM348 276h1V279h-1ZM349 276h1V279h-1ZM350 276h1V279h-1ZM351 276h1V279h-1ZM352 276h1V279h-1ZM353 276h1V279h-1ZM354 276h1V279h-1ZM355 276h1V279h-1ZM356 276h1V279h-1ZM357 276h1V279h-1ZM358 276h1V279h-1ZM359 276h1V279h-1ZM360 276h1V279h-1ZM361 276h1V279h-1ZM362 276h1V279h-1ZM363 276h1V279h-1ZM364 276h1V279h-1ZM365 276h1V279h-1ZM366 276h1V279h-1ZM367 276h1V279h-1ZM368 276h1V279h-1ZM369 276h1V279h-1ZM370 276h1V279h-1ZM371 276h1V279h-1ZM372 276h1V279h-1ZM373 276h1V279h-1ZM374 276h1V279h-1ZM375 276h1V279h-1ZM376 276h1V279h-1ZM377 276h1V279h-1ZM378 276h1V279h-1ZM379 276h1V279h-1ZM380 276h1V279h-1ZM381 276h1V279h-1ZM382 276h1V279h-1ZM383 276h1V279h-1ZM384 276h1V279h-1ZM385 276h1V279h-1ZM386 276h1V279h-1ZM387 276h1V279h-1ZM388 276h1V279h-1ZM389 276h1V279h-1ZM390 276h1V279h-1ZM391 276h1V279h-1ZM392 276h1V279h-1ZM393 276h1V279h-1ZM394 276h1V279h-1ZM395 276h1V279h-1ZM396 276h1V279h-1ZM397 276h1V279h-1ZM398 276h1V279h-1ZM399 276h1V279h-1ZM400 276h1V279h-1ZM401 276h1V279h-1ZM402 276h1V279h-1ZM403 276h1V279h-1ZM404 276h1V279h-1ZM405 276h1V279h-1ZM406 276h1V279h-1ZM407 276h1V279h-1ZM408 276h1V279h-1ZM409 276h1V279h-1ZM410 276h1V279h-1ZM411 276h1V279h-1ZM412 276h1V279h-1ZM413 276h1V279h-1ZM414 276h1V279h-1ZM415 276h1V279h-1ZM416 276h1V279h-1ZM417 276h1V279h-1ZM418 276h1V279h-1ZM419 276h1V279h-1ZM420 276h1V279h-1ZM421 276h1V279h-1ZM422 276h1V279h-1ZM423 276h1V279h-1ZM424 276h1V279h-1ZM425 276h1V279h-1ZM426 276h1V279h-1ZM427 276h1V279h-1ZM428 276h1V279h-1ZM429 276h1V279h-1ZM430 276h1V279h-1ZM431 276h1V279h-1ZM432 276h1V279h-1ZM433 276h1V279h-1ZM434 276h1V279h-1ZM435 276h1V279h-1ZM436 276h1V279h-1ZM437 275h1V278h-1ZM438 275h1V278h-1ZM439 275h1V278h-1ZM440 274h1V278h-1ZM441 274h1V277h-1ZM442 274h1V277h-1ZM443 273h1V277h-1ZM444 273h1V276h-1ZM445 273h1V276h-1ZM446 273h1V276h-1ZM447 272h1V275h-1ZM448 272h1V275h-1ZM449 272h1V275h-1ZM450 271h1V274h-1ZM451 271h1V274h-1ZM452 270h1V274h-1ZM453 270h1V273h-1ZM454 270h1V273h-1ZM455 269h1V273h-1ZM456 269h1V272h-1ZM457 269h1V272h-1ZM458 268h1V271h-1ZM459 268h1V271h-1ZM460 267h1V271h-1ZM461 267h1V270h-1ZM462 267h1V270h-1ZM463 266h1V269h-1ZM464 266h1V269h-1ZM465 265h1V268h-1ZM466 265h1V268h-1ZM467 264h1V268h-1ZM468 264h1V267h-1ZM469 263h1V267h-1ZM470 263h1V266h-1ZM471 262h1V266h-1ZM472 262h1V265h-1ZM473 261h1V265h-1ZM474 261h1V264h-1ZM475 260h1V264h-1ZM476 260h1V263h-1ZM477 259h1V263h-1ZM478 259h1V262h-1ZM479 258h1V262h-1ZM480 258h1V261h-1ZM481 257h1V260h-1ZM482 257h1V260h-1ZM483 256h1V259h-1ZM484 255h1V259h-1ZM485 255h1V258h-1ZM486 254h1V257h-1ZM487 253h1V257h-1ZM488 253h1V256h-1ZM489 252h1V256h-1ZM490 252h1V255h-1ZM491 251h1V254h-1ZM492 250h1V254h-1ZM493 249h1V253h-1ZM494 249h1V252h-1ZM495 248h1V251h-1ZM496 247h1V251h-1ZM497 247h1V250h-1ZM498 246h1V249h-1ZM499 245h1V248h-1ZM500 244h1V248h-1ZM501 243h1V247h-1ZM502 243h1V246h-1ZM503 242h1V245h-1ZM504 241h1V244h-1ZM505 240h1V244h-1ZM506 239h1V243h-1ZM507 238h1V242h-1ZM508 238h1V241h-1ZM509 237h1V240h-1ZM510 236h1V239h-1ZM511 235h1V238h-1ZM512 234h1V237h-1ZM513 233h1V236h-1ZM514 232h1V235h-1ZM515 231h1V234h-1ZM516 230h1V233h-1ZM517 229h1V232h-1ZM518 228h1V231h-1ZM519 227h1V230h-1ZM520 226h1V229h-1ZM521 225h1V228h-1ZM522 223h1V227h-1ZM523 222h1V226h-1ZM524 221h1V225h-1ZM525 220h1V224h-1ZM526 219h1V222h-1ZM527 218h1V221h-1ZM528 216h1V220h-1ZM529 215h1V219h-1ZM530 214h1V217h-1ZM531 213h1V216h-1ZM532 211h1V215h-1ZM533 210h1V214h-1ZM534 209h1V212h-1ZM535 207h1V211h-1ZM536 206h1V209h-1ZM537 204h1V208h-1ZM538 203h1V207h-1ZM539 201h1V205h-1ZM540 200h1V204h-1ZM541 198h1V202h-1ZM542 197h1V201h-1ZM543 195h1V199h-1ZM544 194h1V197h-1ZM545 192h1V196h-1ZM546 190h1V194h-1ZM547 190h1V193h-1ZM548 190h1V193h-1ZM549 190h1V193h-1ZM550 190h1V193h-1ZM551 190h1V193h-1ZM552 190h1V193h-1ZM553 190h1V193h-1ZM554 190h1V193h-1ZM555 190h1V193h-1ZM556 190h1V193h-1ZM557 190h1V193h-1ZM558 190h1V193h-1ZM559 190h1V193h-1ZM560 190h1V193h-1ZM561 190h1V193h-1ZM562 190h1V193h-1ZM563 190h1V193h-1ZM564 190h1V193h-1ZM565 190h1V193h-1ZM566 190h1V193h-1ZM567 190h1V193h-1ZM568 190h1V193h-1ZM569 190h1V193h-1ZM570 190h1V193h-1ZM571 190h1V193h-1ZM572 190h1V193h-1ZM573 190h1V193h-1ZM574 190h1V193h-1ZM575 190h1V193h-1ZM576 190h1V193h-1ZM577 190h1V193h-1ZM578 190h1V193h-1ZM579 190h1V193h-1ZM580 190h1V193h-1ZM581 190h1V193h-1ZM582 190h1V193h-1ZM583 190h1V193h-1ZM584 190h1V193h-1ZM585 190h1V193h-1ZM586 190h1V193h-1ZM587 190h1V193h-1ZM588 190h1V193h-1ZM589 190h1V193h-1ZM590 190h1V193h-1ZM591 190h1V193h-1ZM592 190h1V193h-1ZM593 190h1V193h-1ZM594 190h1V193h-1ZM595 190h1V193h-1ZM596 190h1V193h-1ZM597 190h1V193h-1ZM598 190h1V193h-1ZM599 190h1V193h-1ZM600 190h1V193h-1ZM601 190h1V193h-1ZM602 190h1V193h-1ZM603 190h1V193h-1ZM604 190h1V193h-1ZM605 190h1V193h-1ZM606 190h1V193h-1ZM607 190h1V193h-1ZM608 190h1V193h-1ZM609 190h1V193h-1ZM610 190h1V193h-1ZM611 190h1V193h-1ZM612 190h1V193h-1ZM613 190h1V193h-1ZM614 190h1V193h-1ZM615 190h1V193h-1ZM616 190h1V193h-1ZM617 190h1V193h-1ZM618 190h1V193h-1ZM619 190h1V193h-1ZM620 190h1V193h-1ZM621 190h1V193h-1ZM622 190h1V193h-1ZM623 190h1V193h-1ZM624 190h1V193h-1ZM625 190h1V193h-1ZM626 190h1V193h-1ZM627 190h1V193h-1ZM628 190h1V193h-1ZM629 190h1V193h-1ZM630 190h1V193h-1ZM631 190h1V193h-1ZM632 190h1V193h-1ZM633 190h1V193h-1ZM634 190h1V193h-1ZM635 190h1V193h-1ZM636 190h1V193h-1ZM141 362h1V365h-1ZM142 362h1V365h-1ZM143 362h1V365h-1ZM144 362h1V365h-1ZM145 362h1V365h-1ZM146 362h1V365h-1ZM147 362h1V365h-1ZM148 362h1V365h-1ZM149 362h1V365h-1ZM150 362h1V365h-1ZM151 362h1V365h-1ZM152 362h1V365h-1ZM153 362h1V365h-1ZM154 362h1V365h-1ZM155 362h1V365h-1ZM156 362h1V365h-1ZM157 362h1V365h-1ZM158 362h1V365h-1ZM159 362h1V365h-1ZM160 362h1V365h-1ZM161 362h1V365h-1ZM162 362h1V365h-1ZM163 362h1V365h-1ZM164 362h1V365h-1ZM165 362h1V365h-1ZM166 362h1V365h-1ZM167 362h1V365h-1ZM168 362h1V365h-1ZM169 362h1V365h-1ZM170 362h1V365h-1ZM171 362h1V365h-1ZM172 362h1V365h-1ZM173 362h1V365h-1ZM174 362h1V365h-1ZM175 362h1V365h-1ZM176 362h1V365h-1ZM177 362h1V365h-1ZM178 362h1V365h-1ZM179 362h1V365h-1ZM180 362h1V365h-1ZM181 362h1V365h-1ZM182 362h1V365h-1ZM183 362h1V365h-1ZM184 362h1V365h-1ZM185 362h1V365h-1ZM186 362h1V365h-1ZM187 362h1V365h-1ZM188 362h1V365h-1ZM189 362h1V365h-1ZM190 362h1V365h-1ZM191 362h1V365h-1ZM192 362h1V365h-1ZM193 362h1V365h-1ZM194 362h1V365h-1ZM195 362h1V365h-1ZM196 362h1V365h-1ZM197 362h1V365h-1ZM198 362h1V365h-1ZM199 362h1V365h-1ZM200 362h1V365h-1ZM201 362h1V365h-1ZM202 362h1V365h-1ZM203 362h1V365h-1ZM204 362h1V365h-1ZM205 362h1V365h-1ZM206 362h1V365h-1ZM207 362h1V365h-1ZM208 362h1V365h-1ZM209 362h1V365h-1ZM210 362h1V365h-1ZM211 362h1V365h-1ZM212 362h1V365h-1ZM213 362h1V365h-1ZM214 362h1V365h-1ZM215 362h1V365h-1ZM216 362h1V365h-1ZM217 362h1V365h-1ZM218 362h1V365h-1ZM219 362h1V365h-1ZM220 362h1V365h-1ZM221 362h1V365h-1ZM222 362h1V365h-1ZM223 361h1V365h-1ZM224 360h1V364h-1ZM225 359h1V362h-1ZM226 358h1V361h-1ZM227 357h1V360h-1ZM228 356h1V359h-1ZM229 355h1V358h-1ZM230 354h1V357h-1ZM231 353h1V356h-1ZM232 352h1V355h-1ZM233 351h1V354h-1ZM234 350h1V353h-1ZM235 349h1V352h-1ZM236 348h1V351h-1ZM237 347h1V351h-1ZM238 346h1V350h-1ZM239 345h1V349h-1ZM240 345h1V348h-1ZM241 344h1V347h-1ZM242 343h1V346h-1ZM243 342h1V345h-1ZM244 341h1V345h-1ZM245 340h1V344h-1ZM246 340h1V343h-1ZM247 339h1V342h-1ZM248 338h1V342h-1ZM249 337h1V341h-1ZM250 337h1V340h-1ZM251 336h1V339h-1ZM252 335h1V339h-1ZM253 335h1V338h-1ZM254 334h1V337h-1ZM255 333h1V337h-1ZM256 333h1V336h-1ZM257 332h1V335h-1ZM258 331h1V335h-1ZM259 331h1V334h-1ZM260 330h1V333h-1ZM261 329h1V333h-1ZM262 329h1V332h-1ZM263 328h1V332h-1ZM264 328h1V331h-1ZM265 327h1V330h-1ZM266 327h1V330h-1ZM267 326h1V329h-1ZM268 325h1V329h-1ZM269 325h1V328h-1ZM270 324h1V328h-1ZM271 324h1V327h-1ZM272 323h1V327h-1ZM273 323h1V326h-1ZM274 322h1V326h-1ZM275 322h1V325h-1ZM276 321h1V325h-1ZM277 321h1V324h-1ZM278 320h1V324h-1ZM279 320h1V323h-1ZM280 320h1V323h-1ZM281 319h1V322h-1ZM282 319h1V322h-1ZM283 318h1V321h-1ZM284 318h1V321h-1ZM285 317h1V321h-1ZM286 317h1V320h-1ZM287 317h1V320h-1ZM288 316h1V319h-1ZM289 316h1V319h-1ZM290 315h1V319h-1ZM291 315h1V318h-1ZM292 315h1V318h-1ZM293 314h1V318h-1ZM294 314h1V317h-1ZM295 314h1V317h-1ZM296 313h1V316h-1ZM297 313h1V316h-1ZM298 313h1V316h-1ZM299 312h1V315h-1ZM300 312h1V315h-1ZM301 312h1V315h-1ZM302 311h1V315h-1ZM303 311h1V314h-1ZM304 311h1V314h-1ZM305 310h1V314h-1ZM306 310h1V313h-1ZM307 310h1V313h-1ZM308 310h1V313h-1ZM309 309h1V312h-1ZM310 309h1V312h-1ZM311 309h1V312h-1ZM312 309h1V312h-1ZM313 309h1V312h-1ZM314 309h1V312h-1ZM315 309h1V312h-1ZM316 309h1V312h-1ZM317 309h1V312h-1ZM318 309h1V312h-1ZM319 309h1V312h-1ZM320 309h1V312h-1ZM321 309h1V312h-1ZM322 309h1V312h-1ZM323 309h1V312h-1ZM324 309h1V312h-1ZM325 309h1V312h-1ZM326 309h1V312h-1ZM327 309h1V312h-1ZM328 309h1V312h-1ZM329 309h1V312h-1ZM330 309h1V312h-1ZM331 309h1V312h-1ZM332 309h1V312h-1ZM333 309h1V312h-1ZM334 309h1V312h-1ZM335 309h1V312h-1ZM336 309h1V312h-1ZM337 309h1V312h-1ZM338 309h1V312h-1ZM339 309h1V312h-1ZM340 309h1V312h-1ZM341 309h1V312h-1ZM342 309h1V312h-1ZM343 309h1V312h-1ZM344 309h1V312h-1ZM345 309h1V312h-1ZM346 309h1V312h-1ZM347 309h1V312h-1ZM348 309h1V312h-1ZM349 309h1V312h-1ZM350 309h1V312h-1ZM351 309h1V312h-1ZM352 309h1V312h-1ZM353 309h1V312h-1ZM354 309h1V312h-1ZM355 309h1V312h-1ZM356 309h1V312h-1ZM357 309h1V312h-1ZM358 309h1V312h-1ZM359 309h1V312h-1ZM360 309h1V312h-1ZM361 309h1V312h-1ZM362 309h1V312h-1ZM363 309h1V312h-1ZM364 309h1V312h-1ZM365 309h1V312h-1ZM366 309h1V312h-1ZM367 309h1V312h-1ZM368 309h1V312h-1ZM369 309h1V312h-1ZM370 309h1V312h-1ZM371 309h1V312h-1ZM372 309h1V312h-1ZM373 309h1V312h-1ZM374 309h1V312h-1ZM375 309h1V312h-1ZM376 309h1V312h-1ZM377 309h1V312h-1ZM378 309h1V312h-1ZM379 309h1V312h-1ZM380 309h1V312h-1ZM381 309h1V312h-1ZM382 309h1V312h-1ZM383 309h1V312h-1ZM384 309h1V312h-1ZM385 309h1V312h-1ZM386 309h1V312h-1ZM387 309h1V312h-1ZM388 309h1V312h-1ZM389 309h1V312h-1ZM390 309h1V312h-1ZM391 309h1V312h-1ZM392 309h1V312h-1ZM393 309h1V312h-1ZM394 309h1V312h-1ZM395 309h1V312h-1ZM396 309h1V312h-1ZM397 309h1V312h-1ZM398 309h1V312h-1ZM399 309h1V312h-1ZM400 309h1V312h-1ZM401 309h1V312h-1ZM402 309h1V312h-1ZM403 309h1V312h-1ZM404 309h1V312h-1ZM405 309h1V312h-1ZM406 309h1V312h-1ZM407 309h1V312h-1ZM408 309h1V312h-1ZM409 309h1V312h-1ZM410 309h1V312h-1ZM411 309h1V312h-1ZM412 309h1V312h-1ZM413 309h1V312h-1ZM414 309h1V312h-1ZM415 309h1V312h-1ZM416 309h1V312h-1ZM417 309h1V312h-1ZM418 309h1V312h-1ZM419 309h1V312h-1ZM420 309h1V312h-1ZM421 309h1V312h-1ZM422 309h1V312h-1ZM423 309h1V312h-1ZM424 309h1V312h-1ZM425 309h1V312h-1ZM426 309h1V312h-1ZM427 309h1V312h-1ZM428 309h1V312h-1ZM429 309h1V312h-1ZM430 309h1V312h-1ZM431 309h1V312h-1ZM432 309h1V312h-1ZM433 309h1V312h-1ZM434 309h1V312h-1ZM435 309h1V312h-1ZM436 309h1V312h-1ZM437 310h1V313h-1ZM438 310h1V313h-1ZM439 310h1V313h-1ZM440 310h1V314h-1ZM441 311h1V314h-1ZM442 311h1V314h-1ZM443 311h1V315h-1ZM444 312h1V315h-1ZM445 312h1V315h-1ZM446 312h1V315h-1ZM447 313h1V316h-1ZM448 313h1V316h-1ZM449 313h1V316h-1ZM450 314h1V317h-1ZM451 314h1V317h-1ZM452 314h1V318h-1ZM453 315h1V318h-1ZM454 315h1V318h-1ZM455 315h1V319h-1ZM456 316h1V319h-1ZM457 316h1V319h-1ZM458 317h1V320h-1ZM459 317h1V320h-1ZM460 317h1V321h-1ZM461 318h1V321h-1ZM462 318h1V321h-1ZM463 319h1V322h-1ZM464 319h1V322h-1ZM465 320h1V323h-1ZM466 320h1V323h-1ZM467 320h1V324h-1ZM468 321h1V324h-1ZM469 321h1V325h-1ZM470 322h1V325h-1ZM471 322h1V326h-1ZM472 323h1V326h-1ZM473 323h1V327h-1ZM474 324h1V327h-1ZM475 324h1V328h-1ZM476 325h1V328h-1ZM477 325h1V329h-1ZM478 326h1V329h-1ZM479 326h1V330h-1ZM480 327h1V330h-1ZM481 328h1V331h-1ZM482 328h1V331h-1ZM483 329h1V332h-1ZM484 329h1V333h-1ZM485 330h1V333h-1ZM486 331h1V334h-1ZM487 331h1V335h-1ZM488 332h1V335h-1ZM489 332h1V336h-1ZM490 333h1V336h-1ZM491 334h1V337h-1ZM492 334h1V338h-1ZM493 335h1V339h-1ZM494 336h1V339h-1ZM495 337h1V340h-1ZM496 337h1V341h-1ZM497 338h1V341h-1ZM498 339h1V342h-1ZM499 340h1V343h-1ZM500 340h1V344h-1ZM501 341h1V345h-1ZM502 342h1V345h-1ZM503 343h1V346h-1ZM504 344h1V347h-1ZM505 344h1V348h-1ZM506 345h1V349h-1ZM507 346h1V350h-1ZM508 347h1V350h-1ZM509 348h1V351h-1ZM510 349h1V352h-1ZM511 350h1V353h-1ZM512 351h1V354h-1ZM513 352h1V355h-1ZM514 353h1V356h-1ZM515 354h1V357h-1ZM516 355h1V358h-1ZM517 356h1V359h-1ZM518 357h1V360h-1ZM519 358h1V361h-1ZM520 359h1V362h-1ZM521 360h1V363h-1ZM522 361h1V365h-1ZM523 362h1V366h-1ZM524 363h1V367h-1ZM525 364h1V368h-1ZM526 366h1V369h-1ZM527 367h1V370h-1ZM528 368h1V372h-1ZM529 369h1V373h-1ZM530 371h1V374h-1ZM531 372h1V375h-1ZM532 373h1V377h-1ZM533 374h1V378h-1ZM534 376h1V379h-1ZM535 377h1V381h-1ZM536 379h1V382h-1ZM537 380h1V384h-1ZM538 381h1V385h-1ZM539 383h1V387h-1ZM540 384h1V388h-1ZM541 386h1V390h-1ZM542 387h1V391h-1ZM543 389h1V393h-1ZM544 391h1V394h-1ZM545 392h1V396h-1ZM546 394h1V398h-1ZM547 395h1V398h-1ZM548 395h1V398h-1ZM549 395h1V398h-1ZM550 395h1V398h-1ZM551 395h1V398h-1ZM552 395h1V398h-1ZM553 395h1V398h-1ZM554 395h1V398h-1ZM555 395h1V398h-1ZM556 395h1V398h-1ZM557 395h1V398h-1ZM558 395h1V398h-1ZM559 395h1V398h-1ZM560 395h1V398h-1ZM561 395h1V398h-1ZM562 395h1V398h-1ZM563 395h1V398h-1ZM564 395h1V398h-1ZM565 395h1V398h-1ZM566 395h1V398h-1ZM567 395h1V398h-1ZM568 395h1V398h-1ZM569 395h1V398h-1ZM570 395h1V398h-1ZM571 395h1V398h-1ZM572 395h1V398h-1ZM573 395h1V398h-1ZM574 395h1V398h-1ZM575 395h1V398h-1ZM576 395h1V398h-1ZM577 395h1V398h-1ZM578 395h1V398h-1ZM579 395h1V398h-1ZM580 395h1V398h-1ZM581 395h1V398h-1ZM582 395h1V398h-1ZM583 395h1V398h-1ZM584 395h1V398h-1ZM585 395h1V398h-1ZM586 395h1V398h-1ZM587 395h1V398h-1ZM588 395h1V398h-1ZM589 395h1V398h-1ZM590 395h1V398h-1ZM591 395h1V398h-1ZM592 395h1V398h-1ZM593 395h1V398h-1ZM594 395h1V398h-1ZM595 395h1V398h-1ZM596 395h1V398h-1ZM597 395h1V398h-1ZM598 395h1V398h-1ZM599 395h1V398h-1ZM600 395h1V398h-1ZM601 395h1V398h-1ZM602 395h1V398h-1ZM603 395h1V398h-1ZM604 395h1V398h-1ZM605 395h1V398h-1ZM606 395h1V398h-1ZM607 395h1V398h-1ZM608 395h1V398h-1ZM609 395h1V398h-1ZM610 395h1V398h-1ZM611 395h1V398h-1ZM612 395h1V398h-1ZM613 395h1V398h-1ZM614 395h1V398h-1ZM615 395h1V398h-1ZM616 395h1V398h-1ZM617 395h1V398h-1ZM618 395h1V398h-1ZM619 395h1V398h-1ZM620 395h1V398h-1ZM621 395h1V398h-1ZM622 395h1V398h-1ZM623 395h1V398h-1ZM624 395h1V398h-1ZM625 395h1V398h-1ZM626 395h1V398h-1ZM627 395h1V398h-1ZM628 395h1V398h-1ZM629 395h1V398h-1ZM630 395h1V398h-1ZM631 395h1V398h-1ZM632 395h1V398h-1ZM633 395h1V398h-1ZM634 395h1V398h-1ZM635 395h1V398h-1ZM636 395h1V398h-1Z"/><path fill="#6464dc" d="M221 223h1v-1h2v1h1v2h-1v1h-2v-1h-1ZM221 362h1v-1h2v1h1v2h-1v1h-2v-1h-1ZM221 274h1v-1h2v1h1v2h-1v1h-2v-1h-1ZM221 311h1v-1h2v1h1v2h-1v1h-2v-1h-1ZM309 276h1v-1h2v1h1v2h-1v1h-2v-1h-1ZM309 309h1v-1h2v1h1v2h-1v1h-2v-1h-1ZM433 276h1v-1h2v1h1v2h-1v1h-2v-1h-1ZM433 309h1v-1h2v1h1v2h-1v1h-2v-1h-1ZM545 190h1v-1h2v1h1v2h-1v1h-2v-1h-1ZM545 395h1v-1h2v1h1v2h-1v1h-2v-1h-1ZM545 241h1v-1h2v1h1v2h-1v1h-2v-1h-1ZM545 344h1v-1h2v1h1v2h-1v1h-2v-1h-1Z"/><path fill="#fff" d="M222 223h2v2h-2ZM222 362h2v2h-2ZM222 274h2v2h-2ZM222 311h2v2h-2ZM310 276h2v2h-2ZM310 309h2v2h-2ZM434 276h2v2h-2ZM434 309h2v2h-2ZM546 190h2v2h-2ZM546 395h2v2h-2ZM546 241h2v2h-2ZM546 344h2v2h-2Z"/></g></svg>
<!-- vertical ruler labels -->
<div class="t" style="left:118px;top:191px;font-weight:bold">1.0</div>
<div class="t" style="left:118px;top:236px">0.5</div>
<div class="t" style="left:118px;top:288px;font-weight:bold">0.0</div>
<div class="t" style="left:115px;top:339px">-0.5</div>
<div class="t" style="left:115px;top:384px;font-weight:bold">-1.0</div>
<svg style="left:0;top:0" width="663" height="551">
 <path d="M137 242.5H140M137 345.5H140" stroke="#000" stroke-width="1"/><path d="M135 294H140" stroke="#000" stroke-width="2"/>
</svg>
<!-- vertical scrollbar -->
<div class="a" style="left:643px;top:185px;width:15px;height:290px;background:#ece9d8"></div>
<div class="a" style="left:643px;top:185px;width:15px;height:15px;background:#ece9d8;border-top:1px solid #fff;border-left:1px solid #fff;border-right:1px solid #aca899;border-bottom:1px solid #aca899"></div>
<div class="a" style="left:643px;top:200px;width:15px;height:257px;background:#ece9d8;border-top:1px solid #fff;border-left:1px solid #fff;border-right:1px solid #aca899;border-bottom:1px solid #aca899"></div>
<div class="a" style="left:643px;top:457px;width:15px;height:18px;background:#ece9d8;border-top:1px solid #fff;border-left:1px solid #fff;border-right:1px solid #aca899;border-bottom:1px solid #aca899"></div>
<svg style="left:0;top:0" width="663" height="551">
 <path d="M647 194.5H654L650.5 190.5Z" fill="#000"/>
 <path d="M647 464H654L650.5 468Z" fill="#000"/>
</svg>
<!-- horizontal scrollbar -->
<div class="hl" style="left:4px;top:475px;width:639px;background:#000"></div>
<div class="a" style="left:4px;top:476px;width:639px;height:15px;background:#ece9d8"></div>
<div class="a" style="left:156px;top:476px;width:470px;height:15px;background:repeating-conic-gradient(#fcfcf9 0 25%,#ece9d8 0 50%) 0 0/2px 2px"></div>
<div class="a" style="left:140px;top:476px;width:16px;height:15px;background:#ece9d8;border-top:1px solid #fff;border-left:1px solid #fff;border-right:1px solid #aca899;border-bottom:1px solid #aca899"></div>
<div class="a" style="left:293px;top:476px;width:32px;height:15px;background:#ece9d8;border-top:1px solid #fff;border-left:1px solid #fff;border-right:1px solid #aca899;border-bottom:1px solid #aca899"></div>
<div class="a" style="left:626px;top:476px;width:16px;height:15px;background:#ece9d8;border-top:1px solid #fff;border-left:1px solid #fff;border-right:1px solid #aca899;border-bottom:1px solid #aca899"></div>
<div class="a" style="left:643px;top:475px;width:16px;height:17px;background:#808080"></div>
<svg style="left:0;top:0" width="663" height="551">
 <path d="M146 483.5L150 479.5V487.5Z" fill="#000"/>
 <path d="M636 483.5L632 479.5V487.5Z" fill="#000"/>
</svg>
<div class="hl" style="left:4px;top:491px;width:655px;background:#000"></div>
<div class="hl" style="left:4px;top:493px;width:655px;background:#fff"></div>
<!-- status -->
<div class="a" style="left:8px;top:498px;width:648px;height:18px;border-top:1px solid #aca899;border-left:1px solid #aca899;border-right:1px solid #fff;border-bottom:1px solid #fff"></div>
<div class="t" style="left:7px;top:524px">Project rate:</div>
<div class="a" style="left:72px;top:521px;width:51px;height:18px;border-top:1px solid #aca899;border-left:1px solid #aca899;border-right:1px solid #fff;border-bottom:1px solid #fff"></div>
<div class="t" style="left:74px;top:524px">44100</div>
<div class="a" style="left:132px;top:521px;width:524px;height:18px;border-top:1px solid #aca899;border-left:1px solid #aca899;border-right:1px solid #fff;border-bottom:1px solid #fff"></div>
<div class="t" style="left:134px;top:524px">Selection: 17:43.794309 - 18:31.633580 (0:47.839271 min:sec)</div>
<div class="t" style="left:446px;top:524px">[Snap-To Off]</div>
<svg style="left:0;top:0" width="663" height="551">
 <path d="M644 544L655 533M648 544L655 537M652 544L655 541" stroke="#aca899" stroke-width="1"/>
 <path d="M645 544L655 534M649 544L655 538M653 544L655 542" stroke="#fff" stroke-width="1"/>
</svg>
<div class="hl" style="left:4px;top:546px;width:655px;background:#d8d2bc"></div>
<div class="vl" style="left:4px;top:494px;height:52px;background:#fff"></div>
<div class="vl" style="left:658px;top:163px;height:384px;background:#d8d2bc"></div>

</body></html>
